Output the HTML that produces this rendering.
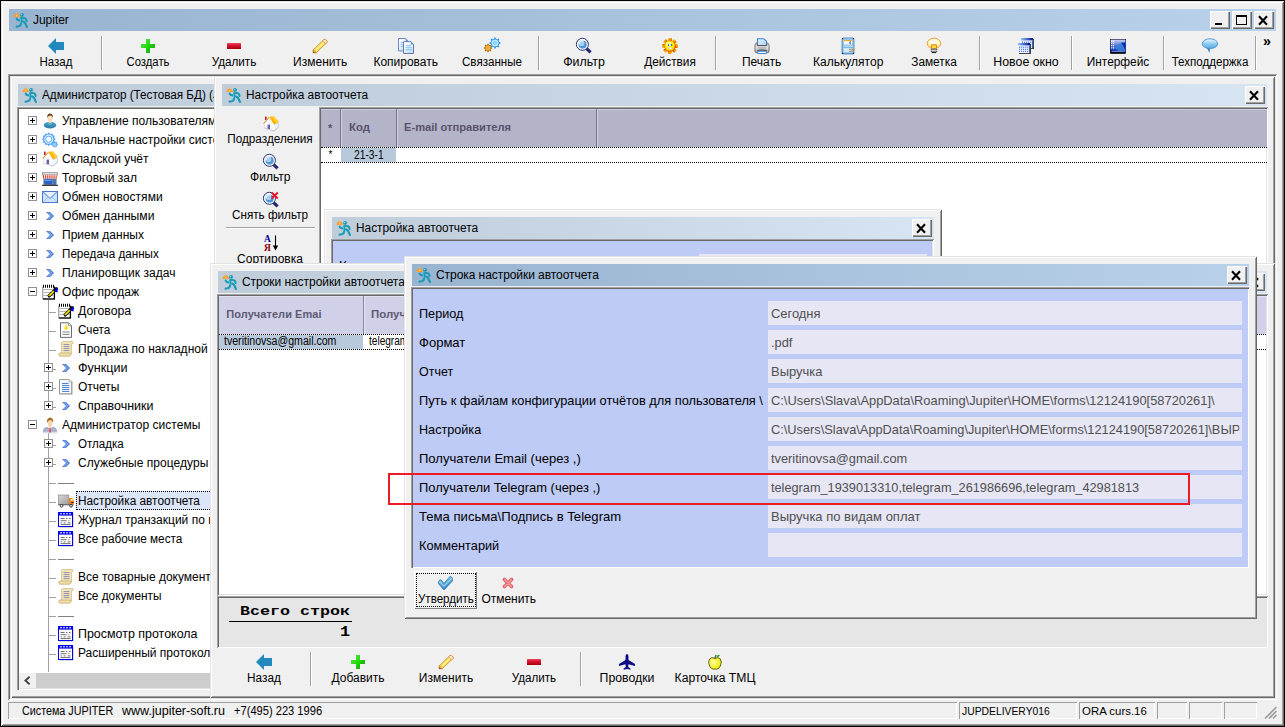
<!DOCTYPE html>
<html lang="ru"><head><meta charset="utf-8"><title>Jupiter</title><style>
html,body{margin:0;padding:0;}
body{width:1285px;height:727px;position:relative;overflow:hidden;background:#f0f0f0;font-family:"Liberation Sans",sans-serif;}
div{position:absolute;box-sizing:border-box;}
.t{white-space:pre;}
.i{position:absolute;overflow:visible;}
.clip{overflow:hidden;}
</style></head><body>
<div style="left:0px;top:0px;width:1285px;height:727px;background:#000;"></div>
<div style="left:1px;top:1px;width:1283px;height:725px;background:#f0f0f0;box-shadow:inset 1px 1px 0 #e3e3e3,inset -1px -1px 0 #696969,inset 2px 2px 0 #fff,inset -2px -2px 0 #a0a0a0;"></div>
<div style="left:9px;top:9px;width:1267px;height:22px;background:linear-gradient(90deg,#99b4d1,#b9d1ea);"></div>
<svg class="i" style="left:13px;top:12px;" width="16" height="16" viewBox="0 0 16 16"><path d="M0.4 4.9 Q0.7 1.8 3.7 1.6 Q6.6 1.8 7 4.9 Z" fill="#ff9d2e"/><rect x="3.2" y="0.1" width="1" height="1.6" fill="#ffb050"/><ellipse cx="3.6" cy="3.7" rx="1" ry="0.5" fill="#ffe3b8"/><circle cx="9" cy="2.9" r="1.95" fill="#1b9ab3"/><circle cx="8.5" cy="2.4" r="0.75" fill="#7fd6e4"/><g fill="none" stroke="#1a9ab5" stroke-width="2.1" stroke-linecap="round" stroke-linejoin="round"><path d="M3.7 6.6 Q4.3 8.3 6.2 8.4"/><path d="M8.1 6.4 L8.1 11.6 Q7.8 14.4 3.6 14.6"/><path d="M8.4 6.2 Q13.4 5.2 13.6 9"/><path d="M10 9.4 Q12.4 10 13 13 L14 15"/></g><path d="M7.6 6.6 L7.6 11" stroke="#6fd0e0" stroke-width="0.7" fill="none"/></svg>
<div class="t" id="t1" style="left:33px;top:13px;font-size:12px;line-height:15px;color:#000;font-family:'Liberation Sans', sans-serif;font-weight:normal;letter-spacing:-0.033px;">Jupiter</div>
<div style="left:1210px;top:11px;width:20px;height:18px;box-shadow:inset 1px 1px 0 #fff,inset -1px -1px 0 #696969,inset -2px -2px 0 #a0a0a0;background:#f0f0f0;"></div>
<div style="left:1215px;top:23px;width:7px;height:2px;background:#000;"></div>
<div style="left:1232px;top:11px;width:20px;height:18px;box-shadow:inset 1px 1px 0 #fff,inset -1px -1px 0 #696969,inset -2px -2px 0 #a0a0a0;background:#f0f0f0;"></div>
<div style="left:1236px;top:15px;width:11px;height:10px;border:1px solid #000;border-top:2px solid #000;"></div>
<div style="left:1254px;top:11px;width:20px;height:18px;box-shadow:inset 1px 1px 0 #fff,inset -1px -1px 0 #696969,inset -2px -2px 0 #a0a0a0;background:#f0f0f0;"></div>
<svg class="i" style="left:1258.0px;top:15.5px;" width="10" height="9" viewBox="0 0 10 9"><path d="M1 0.3 L9 8.7 M9 0.3 L1 8.7" stroke="#000" stroke-width="2.1"/></svg>
<svg class="i" style="left:48px;top:38px;" width="16" height="16" viewBox="0 0 16 16"><polygon points="0,8 8,0 8,4 16,4 16,12 8,12 8,16" fill="#2388bd"/></svg>
<div class="t" id="t2" style="left:-244px;width:600px;text-align:center;top:55px;font-size:12px;line-height:15px;color:#000;font-family:'Liberation Sans', sans-serif;font-weight:normal;transform:scaleX(0.9566560654248069);transform-origin:50% 0;">Назад</div>
<div style="left:101px;top:36px;width:1px;height:34px;background:#a0a0a0;"></div>
<div style="left:102px;top:36px;width:1px;height:34px;background:#fff;"></div>
<svg class="i" style="left:140px;top:38px;" width="16" height="16" viewBox="0 0 16 16"><defs><linearGradient id="gpl" x1="0" y1="0" x2="1" y2="1"><stop offset="0" stop-color="#5ee850"/><stop offset="0.5" stop-color="#22d808"/><stop offset="1" stop-color="#0a9a00"/></linearGradient></defs><path d="M6 1h4v5h5v4h-5v5h-4v-5h-5v-4h5z" fill="url(#gpl)"/></svg>
<div class="t" id="t3" style="left:-152.4px;width:600px;text-align:center;top:55px;font-size:12px;line-height:15px;color:#000;font-family:'Liberation Sans', sans-serif;font-weight:normal;transform:scaleX(0.940596094552929);transform-origin:50% 0;">Создать</div>
<svg class="i" style="left:226px;top:38px;" width="16" height="16" viewBox="0 0 16 16"><defs><linearGradient id="gmi" x1="0" y1="0" x2="0" y2="1"><stop offset="0" stop-color="#e6485c"/><stop offset="0.45" stop-color="#d81030"/><stop offset="1" stop-color="#a00008"/></linearGradient></defs><rect x="1" y="5" width="14" height="6" rx="0.6" fill="url(#gmi)"/></svg>
<div class="t" id="t4" style="left:-66px;width:600px;text-align:center;top:55px;font-size:12px;line-height:15px;color:#000;font-family:'Liberation Sans', sans-serif;font-weight:normal;transform:scaleX(0.9753835663143539);transform-origin:50% 0;">Удалить</div>
<svg class="i" style="left:312px;top:38px;" width="16" height="16" viewBox="0 0 16 16"><polygon points="1.3,14.7 1.3,11.9 11.7,1.7 13.4,1.3 15.1,3 15.1,4.3 4.3,14.7" fill="#f6dc4a" stroke="#d6923a" stroke-width="0.9" stroke-linejoin="round"/><polygon points="10.4,3 11.7,1.7 13.4,1.3 15.1,3 15.1,4.3 13.6,5.8" fill="#fbe6d4" stroke="#d6923a" stroke-width="0.8"/><polygon points="1.3,14.7 1.3,11.9 4.3,14.7" fill="#f6cca4" stroke="#b8741c" stroke-width="0.7"/><polygon points="1.3,14.7 1.3,13.3 2.8,14.7" fill="#4a3008"/><path d="M4.2 11.8 L11.6 4.6" stroke="#fff9b8" stroke-width="1.1"/></svg>
<div class="t" id="t5" style="left:20.19999999999999px;width:600px;text-align:center;top:55px;font-size:12px;line-height:15px;color:#000;font-family:'Liberation Sans', sans-serif;font-weight:normal;letter-spacing:0.020px;">Изменить</div>
<svg class="i" style="left:398px;top:38px;" width="16" height="16" viewBox="0 0 16 16"><defs><linearGradient id="gcp" x1="0" y1="0" x2="0.6" y2="1"><stop offset="0.3" stop-color="#fff"/><stop offset="1" stop-color="#b8e4fb"/></linearGradient></defs><path d="M0.5 0.5h7.2l2.2 2.4v10h-9.4z" fill="url(#gcp)" stroke="#7284c6" stroke-width="1"/><path d="M7.7 0.5l2.2 2.4h-2.2z" fill="#3a96ec"/><path d="M2.5 4.5h5M2.5 6.5h5M2.5 8.5h5" stroke="#8fbcec" stroke-width="1"/><path d="M5.5 3.7h7.4l2.6 2.8v9h-10z" fill="url(#gcp)" stroke="#6c74b4" stroke-width="1"/><path d="M12.9 3.7l2.6 2.8h-2.6z" fill="#3a96ec"/><path d="M7.5 7.7h5.5M7.5 9.7h6.2M7.5 11.7h6.2" stroke="#8fbcec" stroke-width="1"/></svg>
<div class="t" id="t6" style="left:105.69999999999999px;width:600px;text-align:center;top:55px;font-size:12px;line-height:15px;color:#000;font-family:'Liberation Sans', sans-serif;font-weight:normal;letter-spacing:-0.022px;">Копировать</div>
<svg class="i" style="left:484px;top:38px;" width="16" height="16" viewBox="0 0 16 16"><rect x="14.75" y="4.15" width="1.7" height="1.7" fill="#2a92ee" transform="rotate(0.0 15.60 5.00)"/><rect x="13.40" y="7.40" width="1.7" height="1.7" fill="#2a92ee" transform="rotate(45.0 14.25 8.25)"/><rect x="10.15" y="8.75" width="1.7" height="1.7" fill="#2a92ee" transform="rotate(90.0 11.00 9.60)"/><rect x="6.90" y="7.40" width="1.7" height="1.7" fill="#2a92ee" transform="rotate(135.0 7.75 8.25)"/><rect x="5.55" y="4.15" width="1.7" height="1.7" fill="#2a92ee" transform="rotate(180.0 6.40 5.00)"/><rect x="6.90" y="0.90" width="1.7" height="1.7" fill="#2a92ee" transform="rotate(225.0 7.75 1.75)"/><rect x="10.15" y="-0.45" width="1.7" height="1.7" fill="#2a92ee" transform="rotate(270.0 11.00 0.40)"/><rect x="13.40" y="0.90" width="1.7" height="1.7" fill="#2a92ee" transform="rotate(315.0 14.25 1.75)"/><circle cx="11" cy="5" r="4.00" fill="#b4eaff" stroke="#2a92ee" stroke-width="0.8"/><circle cx="11" cy="5" r="1.3" fill="#fff" stroke="#2a92ee" stroke-width="0.6400000000000001"/><rect x="6.80" y="9.30" width="1.4" height="1.4" fill="#b87a08" transform="rotate(0.0 7.50 10.00)"/><rect x="5.77" y="11.77" width="1.4" height="1.4" fill="#b87a08" transform="rotate(45.0 6.47 12.47)"/><rect x="3.30" y="12.80" width="1.4" height="1.4" fill="#b87a08" transform="rotate(90.0 4.00 13.50)"/><rect x="0.83" y="11.77" width="1.4" height="1.4" fill="#b87a08" transform="rotate(135.0 1.53 12.47)"/><rect x="-0.20" y="9.30" width="1.4" height="1.4" fill="#b87a08" transform="rotate(180.0 0.50 10.00)"/><rect x="0.83" y="6.83" width="1.4" height="1.4" fill="#b87a08" transform="rotate(225.0 1.53 7.53)"/><rect x="3.30" y="5.80" width="1.4" height="1.4" fill="#b87a08" transform="rotate(270.0 4.00 6.50)"/><rect x="5.77" y="6.83" width="1.4" height="1.4" fill="#b87a08" transform="rotate(315.0 6.47 7.53)"/><circle cx="4" cy="10" r="2.90" fill="#ffb43a" stroke="#b87a08" stroke-width="0.8"/><circle cx="4" cy="10" r="1.1" fill="#fff" stroke="#b87a08" stroke-width="0.6400000000000001"/></svg>
<div class="t" id="t7" style="left:192.3px;width:600px;text-align:center;top:55px;font-size:12px;line-height:15px;color:#000;font-family:'Liberation Sans', sans-serif;font-weight:normal;transform:scaleX(0.9655519235604727);transform-origin:50% 0;">Связанные</div>
<div style="left:538px;top:36px;width:1px;height:34px;background:#a0a0a0;"></div>
<div style="left:539px;top:36px;width:1px;height:34px;background:#fff;"></div>
<svg class="i" style="left:576px;top:38px;" width="16" height="16" viewBox="0 0 16 16"><path d="M10.6 10.6 L14.6 14.4" stroke="#232a72" stroke-width="3.2" stroke-linecap="butt"/><circle cx="6.4" cy="6.3" r="6" fill="#fff" stroke="#2a2f78" stroke-width="1"/><circle cx="6.6" cy="6.6" r="4.1" fill="#4f97d6"/><circle cx="5.6" cy="5.4" r="2.7" fill="#a8d0f0"/><path d="M3.2 6.2 A3 3 0 0 1 7.6 3.2" stroke="#fff" stroke-width="1" fill="none"/></svg>
<div class="t" id="t8" style="left:283.70000000000005px;width:600px;text-align:center;top:55px;font-size:12px;line-height:15px;color:#000;font-family:'Liberation Sans', sans-serif;font-weight:normal;transform:scaleX(1.0319379844961238);transform-origin:50% 0;">Фильтр</div>
<svg class="i" style="left:662px;top:38px;" width="16" height="16" viewBox="0 0 16 16"><defs><linearGradient id="gsn" x1="0" y1="0" x2="1" y2="1"><stop offset="0.15" stop-color="#ffc400"/><stop offset="0.55" stop-color="#f08000"/><stop offset="1" stop-color="#c02c00"/></linearGradient><radialGradient id="gsf" cx="0.35" cy="0.3" r="0.8"><stop offset="0" stop-color="#ffffc0"/><stop offset="0.6" stop-color="#fff000"/><stop offset="1" stop-color="#f8b800"/></radialGradient></defs><g fill="url(#gsn)"><rect x="6.10" y="0.00" width="3.8" height="3.4" rx="0.8" transform="rotate(0 8.00 1.70)"/><rect x="10.55" y="1.85" width="3.8" height="3.4" rx="0.8" transform="rotate(45 12.45 3.55)"/><rect x="12.40" y="6.30" width="3.8" height="3.4" rx="0.8" transform="rotate(90 14.30 8.00)"/><rect x="10.55" y="10.75" width="3.8" height="3.4" rx="0.8" transform="rotate(135 12.45 12.45)"/><rect x="6.10" y="12.60" width="3.8" height="3.4" rx="0.8" transform="rotate(180 8.00 14.30)"/><rect x="1.65" y="10.75" width="3.8" height="3.4" rx="0.8" transform="rotate(225 3.55 12.45)"/><rect x="-0.20" y="6.30" width="3.8" height="3.4" rx="0.8" transform="rotate(270 1.70 8.00)"/><rect x="1.65" y="1.85" width="3.8" height="3.4" rx="0.8" transform="rotate(315 3.55 3.55)"/><circle cx="8" cy="8" r="5.6"/></g><circle cx="8" cy="8" r="4.8" fill="url(#gsf)"/><ellipse cx="6.5" cy="7.1" rx="0.7" ry="1.1" fill="#1868f0"/><ellipse cx="9.6" cy="7.1" rx="0.7" ry="1.1" fill="#1868f0"/><path d="M5.3 9.2 h5.5 q-0.6 2.2 -2.75 2.2 q-2.15 0 -2.75 -2.2z" fill="#f4f4ff" stroke="#f0c000" stroke-width="0.4"/></svg>
<div class="t" id="t9" style="left:369.70000000000005px;width:600px;text-align:center;top:55px;font-size:12px;line-height:15px;color:#000;font-family:'Liberation Sans', sans-serif;font-weight:normal;transform:scaleX(0.983298662704309);transform-origin:50% 0;">Действия</div>
<div style="left:715px;top:36px;width:1px;height:34px;background:#a0a0a0;"></div>
<div style="left:716px;top:36px;width:1px;height:34px;background:#fff;"></div>
<svg class="i" style="left:754px;top:38px;" width="16" height="16" viewBox="0 0 16 16"><defs><linearGradient id="gpr" x1="0" y1="0" x2="0" y2="1"><stop offset="0" stop-color="#fff"/><stop offset="0.6" stop-color="#d8d8d8"/><stop offset="1" stop-color="#9a9a9a"/></linearGradient><linearGradient id="gpp" x1="0" y1="0" x2="1" y2="1"><stop offset="0" stop-color="#e8f2ff"/><stop offset="1" stop-color="#a8d0f8"/></linearGradient></defs><path d="M3.5 7.5v-6.8h6.2l2.8 2.6v4.2z" fill="url(#gpp)" stroke="#3f86d2" stroke-width="1.1"/><path d="M1 7.2 q0-1.8 2-2.4v2.8h10v-2.8q2 0.6 2 2.4v6.2q0 1.2-1.2 1.2h-11.6q-1.2 0-1.2-1.2z" fill="url(#gpr)" stroke="#6a6a6a" stroke-width="0.9"/><path d="M3.2 7.6h9.6" stroke="#555" stroke-width="0.9"/><rect x="3.6" y="9" width="8.8" height="3" fill="#bdbdbd"/><path d="M3.4 12.6 q4.6-1.2 9.2 0" stroke="#222" stroke-width="0.9" fill="none"/><path d="M3.6 13.2h8.8v2.3h-8.8z" fill="#eef4fc" stroke="#3f86d2" stroke-width="1"/></svg>
<div class="t" id="t10" style="left:461.6px;width:600px;text-align:center;top:55px;font-size:12px;line-height:15px;color:#000;font-family:'Liberation Sans', sans-serif;font-weight:normal;letter-spacing:-0.002px;">Печать</div>
<svg class="i" style="left:840px;top:38px;" width="16" height="16" viewBox="0 0 16 16"><defs><linearGradient id="gca" x1="0" y1="0" x2="0" y2="1"><stop offset="0" stop-color="#9ccaec"/><stop offset="1" stop-color="#6eaadc"/></linearGradient></defs><rect x="2" y="0" width="12" height="16" rx="0.8" fill="url(#gca)" stroke="#4a84bc" stroke-width="0.8"/><rect x="2" y="0" width="1.2" height="1.2" fill="#123"/><rect x="12.8" y="0" width="1.2" height="1.2" fill="#123"/><rect x="2" y="14.8" width="1.2" height="1.2" fill="#123"/><rect x="12.8" y="14.8" width="1.2" height="1.2" fill="#123"/><rect x="3.8" y="2" width="8.4" height="4.6" fill="#eef8ff"/><rect x="4" y="2" width="8" height="1.1" fill="#ffa826"/><path d="M10.8 3.4 q-2 1.2 0 2.6" stroke="#4a70b8" stroke-width="1.2" fill="none"/><rect x="3.4" y="7.4" width="9.4" height="1.6" fill="#b4daf2"/><rect x="3.4" y="10" width="9.2" height="4.6" fill="#c4e2f6"/><rect x="11" y="10.6" width="1.8" height="3.4" fill="#ffa21a"/><path d="M3.8 11.4h5M3.8 13.4h5" stroke="#e8f2fa" stroke-width="1"/><path d="M9.2 11.4h1.6M9.2 13.4h1.6" stroke="#4a90d0" stroke-width="1"/></svg>
<div class="t" id="t11" style="left:548.2px;width:600px;text-align:center;top:55px;font-size:12px;line-height:15px;color:#000;font-family:'Liberation Sans', sans-serif;font-weight:normal;letter-spacing:0.005px;">Калькулятор</div>
<svg class="i" style="left:926px;top:38px;" width="16" height="16" viewBox="0 0 16 16"><defs><radialGradient id="gbu" cx="0.5" cy="0.4" r="0.6"><stop offset="0" stop-color="#fff"/><stop offset="0.6" stop-color="#fff8c8"/><stop offset="1" stop-color="#ffd860"/></radialGradient></defs><ellipse cx="8" cy="5.4" rx="6.8" ry="5.2" fill="url(#gbu)" stroke="#eca048" stroke-width="1"/><path d="M5.6 10.2 v-3.4 h4.8 v3.4" fill="#ffe23a" stroke="#e87a10" stroke-width="1"/><rect x="5.2" y="11" width="5.6" height="3" fill="#9aa0a6" stroke="#4a4a4a" stroke-width="0.7"/><path d="M5.4 12.6h5.2" stroke="#e8e8e8" stroke-width="0.8"/><rect x="6" y="14" width="4" height="1.1" fill="#2a2a2a"/></svg>
<div class="t" id="t12" style="left:633.6px;width:600px;text-align:center;top:55px;font-size:12px;line-height:15px;color:#000;font-family:'Liberation Sans', sans-serif;font-weight:normal;transform:scaleX(0.9861158144260075);transform-origin:50% 0;">Заметка</div>
<div style="left:979px;top:36px;width:1px;height:34px;background:#a0a0a0;"></div>
<div style="left:980px;top:36px;width:1px;height:34px;background:#fff;"></div>
<svg class="i" style="left:1018px;top:38px;" width="16" height="16" viewBox="0 0 16 16"><defs><linearGradient id="gnw" x1="0" y1="0" x2="1" y2="0"><stop offset="0" stop-color="#8ec8ff"/><stop offset="1" stop-color="#00108c"/></linearGradient></defs><rect x="4" y="1" width="12" height="10" fill="#444"/><rect x="3" y="0" width="12" height="10" fill="#f4f8ff"/><rect x="3" y="0" width="12" height="2.4" fill="url(#gnw)"/><rect x="4.00" y="3.60" width="1.1" height="1.1" fill="#2a5ae8"/><rect x="6.05" y="3.60" width="1.1" height="1.1" fill="#2a5ae8"/><rect x="8.10" y="3.60" width="1.1" height="1.1" fill="#2a5ae8"/><rect x="10.15" y="3.60" width="1.1" height="1.1" fill="#2a5ae8"/><rect x="12.20" y="3.60" width="1.1" height="1.1" fill="#2a5ae8"/><rect x="4.00" y="5.70" width="1.1" height="1.1" fill="#2a5ae8"/><rect x="6.05" y="5.70" width="1.1" height="1.1" fill="#2a5ae8"/><rect x="8.10" y="5.70" width="1.1" height="1.1" fill="#2a5ae8"/><rect x="10.15" y="5.70" width="1.1" height="1.1" fill="#2a5ae8"/><rect x="12.20" y="5.70" width="1.1" height="1.1" fill="#2a5ae8"/><rect x="4.00" y="7.80" width="1.1" height="1.1" fill="#2a5ae8"/><rect x="6.05" y="7.80" width="1.1" height="1.1" fill="#2a5ae8"/><rect x="8.10" y="7.80" width="1.1" height="1.1" fill="#2a5ae8"/><rect x="10.15" y="7.80" width="1.1" height="1.1" fill="#2a5ae8"/><rect x="12.20" y="7.80" width="1.1" height="1.1" fill="#2a5ae8"/><rect x="14" y="2.4" width="1" height="7.6" fill="#3a6ab8"/><rect x="1" y="6" width="12" height="10" fill="#444"/><rect x="0" y="5" width="12" height="10" fill="#f4f8ff"/><rect x="0" y="5" width="12" height="2.4" fill="url(#gnw)"/><rect x="1.00" y="8.60" width="1.1" height="1.1" fill="#2a5ae8"/><rect x="3.05" y="8.60" width="1.1" height="1.1" fill="#2a5ae8"/><rect x="5.10" y="8.60" width="1.1" height="1.1" fill="#2a5ae8"/><rect x="7.15" y="8.60" width="1.1" height="1.1" fill="#2a5ae8"/><rect x="9.20" y="8.60" width="1.1" height="1.1" fill="#2a5ae8"/><rect x="1.00" y="10.70" width="1.1" height="1.1" fill="#2a5ae8"/><rect x="3.05" y="10.70" width="1.1" height="1.1" fill="#2a5ae8"/><rect x="5.10" y="10.70" width="1.1" height="1.1" fill="#2a5ae8"/><rect x="7.15" y="10.70" width="1.1" height="1.1" fill="#2a5ae8"/><rect x="9.20" y="10.70" width="1.1" height="1.1" fill="#2a5ae8"/><rect x="1.00" y="12.80" width="1.1" height="1.1" fill="#2a5ae8"/><rect x="3.05" y="12.80" width="1.1" height="1.1" fill="#2a5ae8"/><rect x="5.10" y="12.80" width="1.1" height="1.1" fill="#2a5ae8"/><rect x="7.15" y="12.80" width="1.1" height="1.1" fill="#2a5ae8"/><rect x="9.20" y="12.80" width="1.1" height="1.1" fill="#2a5ae8"/><rect x="11" y="7.4" width="1" height="7.6" fill="#3a6ab8"/></svg>
<div class="t" id="t13" style="left:725.7px;width:600px;text-align:center;top:55px;font-size:12px;line-height:15px;color:#000;font-family:'Liberation Sans', sans-serif;font-weight:normal;transform:scaleX(1.0283464566929132);transform-origin:50% 0;">Новое окно</div>
<div style="left:1071px;top:36px;width:1px;height:34px;background:#a0a0a0;"></div>
<div style="left:1072px;top:36px;width:1px;height:34px;background:#fff;"></div>
<svg class="i" style="left:1110px;top:38px;" width="16" height="16" viewBox="0 0 16 16"><defs><linearGradient id="gdk" x1="0" y1="0" x2="0" y2="1"><stop offset="0" stop-color="#ccd2f4"/><stop offset="0.5" stop-color="#5070d0"/><stop offset="1" stop-color="#0a24a8"/></linearGradient></defs><rect x="0" y="1" width="16" height="14.6" fill="#101030"/><rect x="0.6" y="1.6" width="14.8" height="12.6" fill="url(#gdk)"/><polygon points="4,10 12,4 15.4,4.5 15.4,14.2 10,14.2" fill="#3a80dc" opacity="0.85"/><polygon points="11.5,5 15.4,4.5 15.4,12" fill="#0c2cb0"/><path d="M1.7 2.6v8.4M3.6 2.6v8.4" stroke="#fff" stroke-width="1.1" stroke-dasharray="1.3 0.9"/><rect x="2" y="13" width="11" height="1" fill="#6a80c8"/><rect x="1" y="14.4" width="14" height="1.2" fill="#000"/></svg>
<div class="t" id="t14" style="left:818.2px;width:600px;text-align:center;top:55px;font-size:12px;line-height:15px;color:#000;font-family:'Liberation Sans', sans-serif;font-weight:normal;transform:scaleX(0.9870489372219475);transform-origin:50% 0;">Интерфейс</div>
<div style="left:1163px;top:36px;width:1px;height:34px;background:#a0a0a0;"></div>
<div style="left:1164px;top:36px;width:1px;height:34px;background:#fff;"></div>
<svg class="i" style="left:1202px;top:38px;" width="16" height="16" viewBox="0 0 16 16"><defs><linearGradient id="gbb" x1="0" y1="0" x2="0" y2="1"><stop offset="0" stop-color="#f4fbff"/><stop offset="0.5" stop-color="#8ecdf4"/><stop offset="1" stop-color="#5aa6e2"/></linearGradient></defs><path d="M4.6 9.6 L7.4 15 L8.2 10.2z" fill="#3f86c8"/><ellipse cx="8" cy="5.7" rx="7.7" ry="4.9" fill="url(#gbb)" stroke="#4a8ed0" stroke-width="0.9"/></svg>
<div class="t" id="t15" style="left:909.7px;width:600px;text-align:center;top:55px;font-size:12px;line-height:15px;color:#000;font-family:'Liberation Sans', sans-serif;font-weight:normal;transform:scaleX(0.9642113533686899);transform-origin:50% 0;">Техподдержка</div>
<div style="left:1255px;top:36px;width:1px;height:34px;background:#a0a0a0;"></div>
<div style="left:1256px;top:36px;width:1px;height:34px;background:#fff;"></div>
<div class="t" id="t16" style="left:1263.3px;top:31px;font-size:15px;line-height:19px;color:#000;font-family:'Liberation Sans', sans-serif;font-weight:bold;transform:scaleX(0.95);transform-origin:0 0;">»</div>
<div style="left:8px;top:74px;width:1269px;height:626px;box-shadow:inset 1px 1px 0 #a0a0a0,inset -1px -1px 0 #fff,inset 2px 2px 0 #696969,inset -2px -2px 0 #e3e3e3;background:#f0f0f0;"></div>
<div class="clip" style="left:10px;top:76px;width:205px;height:622px;">
<div style="left:0px;top:0px;width:400px;height:622px;background:#f0f0f0;box-shadow:inset 1px 1px 0 #e3e3e3,inset 2px 2px 0 #fff,inset 0 -1px 0 #696969,inset 0 -2px 0 #a0a0a0;"></div>
</div>
<div class="clip" style="left:0px;top:0px;width:215px;height:727px;">
<div style="left:18px;top:84px;width:1250px;height:22px;background:linear-gradient(90deg,#bfcddb,#d7e4f2);"></div>
<svg class="i" style="left:22px;top:87px;" width="16" height="16" viewBox="0 0 16 16"><path d="M0.4 4.9 Q0.7 1.8 3.7 1.6 Q6.6 1.8 7 4.9 Z" fill="#ff9d2e"/><rect x="3.2" y="0.1" width="1" height="1.6" fill="#ffb050"/><ellipse cx="3.6" cy="3.7" rx="1" ry="0.5" fill="#ffe3b8"/><circle cx="9" cy="2.9" r="1.95" fill="#1b9ab3"/><circle cx="8.5" cy="2.4" r="0.75" fill="#7fd6e4"/><g fill="none" stroke="#1a9ab5" stroke-width="2.1" stroke-linecap="round" stroke-linejoin="round"><path d="M3.7 6.6 Q4.3 8.3 6.2 8.4"/><path d="M8.1 6.4 L8.1 11.6 Q7.8 14.4 3.6 14.6"/><path d="M8.4 6.2 Q13.4 5.2 13.6 9"/><path d="M10 9.4 Q12.4 10 13 13 L14 15"/></g><path d="M7.6 6.6 L7.6 11" stroke="#6fd0e0" stroke-width="0.7" fill="none"/></svg>
<div class="t" id="t17" style="left:42px;top:88px;font-size:12px;line-height:15px;color:#000;font-family:'Liberation Sans', sans-serif;font-weight:normal;transform:scaleX(0.975);transform-origin:0 0;">Администратор (Тестовая БД) (JUPDELIVERY016)</div>
<div style="left:17px;top:107px;width:300px;height:583px;background:#fff;box-shadow:inset 1px 1px 0 #a0a0a0,inset 2px 2px 0 #696969,inset 0 -1px 0 #fff,inset 0 -2px 0 #e3e3e3;"></div>
<div style="left:48px;top:300px;width:1px;height:107px;background:#a0a0a0;"></div>
<div style="left:48px;top:433px;width:1px;height:239px;background:#a0a0a0;"></div>
<div style="left:28px;top:116px;width:9px;height:9px;border:1px solid #919191;background:#fff;"></div>
<div style="left:30px;top:120px;width:5px;height:1px;background:#000;"></div>
<div style="left:32px;top:118px;width:1px;height:5px;background:#000;"></div>
<svg class="i" style="left:42px;top:113px;" width="16" height="16" viewBox="0 0 16 16"><defs><linearGradient id="gus" x1="0" y1="0" x2="0" y2="1"><stop offset="0" stop-color="#4aa4cc"/><stop offset="1" stop-color="#2a7aa8"/></linearGradient></defs><ellipse cx="8" cy="12.2" rx="6.2" ry="3.4" fill="url(#gus)"/><rect x="6.6" y="7" width="2.8" height="3" fill="#f6d4b4"/><path d="M6 10.4 L8 11.6 L10 10.4" stroke="#8fd0e8" stroke-width="0.7" fill="none"/><ellipse cx="8" cy="4.9" rx="2.6" ry="3.1" fill="#fbdcbc"/><path d="M5.2 4.8 Q4.8 0.6 8.2 0.4 Q11.2 0.8 10.8 4.8 Q10.2 2.8 8.6 2.6 Q6.2 2.6 5.2 4.8z" fill="#6a4220"/></svg>
<div class="t" id="t18" style="left:62px;top:114px;font-size:12px;line-height:15px;color:#000;font-family:'Liberation Sans', sans-serif;font-weight:normal;">Управление пользователями</div>
<div style="left:28px;top:135px;width:9px;height:9px;border:1px solid #919191;background:#fff;"></div>
<div style="left:30px;top:139px;width:5px;height:1px;background:#000;"></div>
<div style="left:32px;top:137px;width:1px;height:5px;background:#000;"></div>
<svg class="i" style="left:42px;top:132px;" width="16" height="16" viewBox="0 0 16 16"><rect x="11.85" y="6.45" width="1.5" height="1.5" fill="#4aa2ff" transform="rotate(0.0 12.60 7.20)"/><rect x="11.07" y="9.35" width="1.5" height="1.5" fill="#4aa2ff" transform="rotate(30.0 11.82 10.10)"/><rect x="8.95" y="11.47" width="1.5" height="1.5" fill="#4aa2ff" transform="rotate(60.0 9.70 12.22)"/><rect x="6.05" y="12.25" width="1.5" height="1.5" fill="#4aa2ff" transform="rotate(90.0 6.80 13.00)"/><rect x="3.15" y="11.47" width="1.5" height="1.5" fill="#4aa2ff" transform="rotate(120.0 3.90 12.22)"/><rect x="1.03" y="9.35" width="1.5" height="1.5" fill="#4aa2ff" transform="rotate(150.0 1.78 10.10)"/><rect x="0.25" y="6.45" width="1.5" height="1.5" fill="#4aa2ff" transform="rotate(180.0 1.00 7.20)"/><rect x="1.03" y="3.55" width="1.5" height="1.5" fill="#4aa2ff" transform="rotate(210.0 1.78 4.30)"/><rect x="3.15" y="1.43" width="1.5" height="1.5" fill="#4aa2ff" transform="rotate(240.0 3.90 2.18)"/><rect x="6.05" y="0.65" width="1.5" height="1.5" fill="#4aa2ff" transform="rotate(270.0 6.80 1.40)"/><rect x="8.95" y="1.43" width="1.5" height="1.5" fill="#4aa2ff" transform="rotate(300.0 9.70 2.18)"/><rect x="11.07" y="3.55" width="1.5" height="1.5" fill="#4aa2ff" transform="rotate(330.0 11.82 4.30)"/><circle cx="6.8" cy="7.2" r="5.20" fill="#e8f6ff" stroke="#4aa2ff" stroke-width="1.2"/><circle cx="6.8" cy="7.2" r="3.1" fill="#fff" stroke="#4aa2ff" stroke-width="0.96"/><rect x="14.85" y="11.85" width="1.1" height="1.1" fill="#4aa2ff" transform="rotate(0.0 15.40 12.40)"/><rect x="14.09" y="13.69" width="1.1" height="1.1" fill="#4aa2ff" transform="rotate(45.0 14.64 14.24)"/><rect x="12.25" y="14.45" width="1.1" height="1.1" fill="#4aa2ff" transform="rotate(90.0 12.80 15.00)"/><rect x="10.41" y="13.69" width="1.1" height="1.1" fill="#4aa2ff" transform="rotate(135.0 10.96 14.24)"/><rect x="9.65" y="11.85" width="1.1" height="1.1" fill="#4aa2ff" transform="rotate(180.0 10.20 12.40)"/><rect x="10.41" y="10.01" width="1.1" height="1.1" fill="#4aa2ff" transform="rotate(225.0 10.96 10.56)"/><rect x="12.25" y="9.25" width="1.1" height="1.1" fill="#4aa2ff" transform="rotate(270.0 12.80 9.80)"/><rect x="14.09" y="10.01" width="1.1" height="1.1" fill="#4aa2ff" transform="rotate(315.0 14.64 10.56)"/><circle cx="12.8" cy="12.4" r="2.00" fill="#dff0ff" stroke="#4aa2ff" stroke-width="0.9"/><circle cx="12.8" cy="12.4" r="0.9" fill="#fff" stroke="#4aa2ff" stroke-width="0.7200000000000001"/></svg>
<div class="t" id="t19" style="left:62px;top:133px;font-size:12px;line-height:15px;color:#000;font-family:'Liberation Sans', sans-serif;font-weight:normal;">Начальные настройки системы</div>
<div style="left:28px;top:154px;width:9px;height:9px;border:1px solid #919191;background:#fff;"></div>
<div style="left:30px;top:158px;width:5px;height:1px;background:#000;"></div>
<div style="left:32px;top:156px;width:1px;height:5px;background:#000;"></div>
<svg class="i" style="left:42px;top:151px;" width="16" height="16" viewBox="0 0 16 16"><rect x="2" y="0.6" width="1.6" height="3.4" fill="#d01818"/><polygon points="1.6,7 6.4,2 6.4,13.4 1.6,12" fill="#fafaff" stroke="#b0b0c8" stroke-width="0.5"/><polygon points="6.4,2 11,8.4 15.4,6.6 15.4,11.2 11,15 6.4,13.4" fill="#eef6fa" stroke="#b0b0c8" stroke-width="0.5"/><polygon points="1.6,7 6.4,2 11,8.4 11,15 1.6,12" fill="#fcfcff"/><polygon points="6.2,0.8 11,0.4 15.8,5.6 11.2,8.8" fill="#ffb400"/><polygon points="8.6,0.6 11,0.4 15.8,5.6 13.6,7.2" fill="#ffd23c"/><path d="M0.6 7.6 L6.2 1.2" stroke="#d89000" stroke-width="1"/><rect x="4.6" y="8.6" width="2.4" height="4.6" fill="#6060a8"/><path d="M1.6 12 L11 15 L15.4 11.2" stroke="#b8b8cc" stroke-width="0.7" fill="none"/></svg>
<div class="t" id="t20" style="left:62px;top:152px;font-size:12px;line-height:15px;color:#000;font-family:'Liberation Sans', sans-serif;font-weight:normal;letter-spacing:-0.061px;">Складской учёт</div>
<div style="left:28px;top:173px;width:9px;height:9px;border:1px solid #919191;background:#fff;"></div>
<div style="left:30px;top:177px;width:5px;height:1px;background:#000;"></div>
<div style="left:32px;top:175px;width:1px;height:5px;background:#000;"></div>
<svg class="i" style="left:42px;top:170px;" width="16" height="16" viewBox="0 0 16 16"><g transform="translate(0,2.2)"><rect x="0.5" y="0.5" width="15" height="2.2" fill="#e4e4e4" stroke="#8a8a8a" stroke-width="0.8"/><rect x="1" y="3" width="14" height="3.4" fill="#fff"/><rect x="1.00" y="3" width="1.1" height="3.4" fill="#e43018"/><rect x="3.10" y="3" width="1.1" height="3.4" fill="#e43018"/><rect x="5.20" y="3" width="1.1" height="3.4" fill="#e43018"/><rect x="7.30" y="3" width="1.1" height="3.4" fill="#e43018"/><rect x="9.40" y="3" width="1.1" height="3.4" fill="#e43018"/><rect x="11.50" y="3" width="1.1" height="3.4" fill="#e43018"/><rect x="13.60" y="3" width="1.1" height="3.4" fill="#e43018"/><rect x="1.4" y="6.4" width="13.2" height="6.4" fill="#7a8088"/><rect x="2.4" y="7" width="7.6" height="5.2" fill="#2a62c8"/><rect x="11.2" y="7" width="2.4" height="5.8" fill="#3a72d4"/><path d="M2.6 8.2h7" stroke="#7ab0f0" stroke-width="0.9"/><rect x="0" y="12.6" width="16" height="1.2" fill="#3a3a3a"/></g></svg>
<div class="t" id="t21" style="left:62px;top:171px;font-size:12px;line-height:15px;color:#000;font-family:'Liberation Sans', sans-serif;font-weight:normal;letter-spacing:0.021px;">Торговый зал</div>
<div style="left:28px;top:192px;width:9px;height:9px;border:1px solid #919191;background:#fff;"></div>
<div style="left:30px;top:196px;width:5px;height:1px;background:#000;"></div>
<div style="left:32px;top:194px;width:1px;height:5px;background:#000;"></div>
<svg class="i" style="left:42px;top:189px;" width="16" height="16" viewBox="0 0 16 16"><rect x="0.5" y="2.5" width="15" height="11" fill="#cfe4ff" stroke="#4a78d0" stroke-width="1"/><path d="M1 3 L8 9.4 L15 3" stroke="#7aa4e4" stroke-width="1.1" fill="#e6f1ff"/><path d="M1 13 L6 8M15 13 L10 8" stroke="#9abcf0" stroke-width="0.9" fill="none"/></svg>
<div class="t" id="t22" style="left:62px;top:190px;font-size:12px;line-height:15px;color:#000;font-family:'Liberation Sans', sans-serif;font-weight:normal;letter-spacing:0.047px;">Обмен новостями</div>
<div style="left:28px;top:211px;width:9px;height:9px;border:1px solid #919191;background:#fff;"></div>
<div style="left:30px;top:215px;width:5px;height:1px;background:#000;"></div>
<div style="left:32px;top:213px;width:1px;height:5px;background:#000;"></div>
<svg class="i" style="left:42px;top:208px;" width="16" height="16" viewBox="0 0 16 16"><polygon points="4,4 8,4 12,8 8,12 4,12 8,8" fill="#4a7ad8"/><polygon points="5.6,4.6 7,4.6 10.4,8 7,11.4 5.6,11.4 9,8" fill="#8aaef0"/></svg>
<div class="t" id="t23" style="left:62px;top:209px;font-size:12px;line-height:15px;color:#000;font-family:'Liberation Sans', sans-serif;font-weight:normal;transform:scaleX(1.0126582278481013);transform-origin:0 0;">Обмен данными</div>
<div style="left:28px;top:230px;width:9px;height:9px;border:1px solid #919191;background:#fff;"></div>
<div style="left:30px;top:234px;width:5px;height:1px;background:#000;"></div>
<div style="left:32px;top:232px;width:1px;height:5px;background:#000;"></div>
<svg class="i" style="left:42px;top:227px;" width="16" height="16" viewBox="0 0 16 16"><polygon points="4,4 8,4 12,8 8,12 4,12 8,8" fill="#4a7ad8"/><polygon points="5.6,4.6 7,4.6 10.4,8 7,11.4 5.6,11.4 9,8" fill="#8aaef0"/></svg>
<div class="t" id="t24" style="left:62px;top:228px;font-size:12px;line-height:15px;color:#000;font-family:'Liberation Sans', sans-serif;font-weight:normal;letter-spacing:0.014px;">Прием данных</div>
<div style="left:28px;top:249px;width:9px;height:9px;border:1px solid #919191;background:#fff;"></div>
<div style="left:30px;top:253px;width:5px;height:1px;background:#000;"></div>
<div style="left:32px;top:251px;width:1px;height:5px;background:#000;"></div>
<svg class="i" style="left:42px;top:246px;" width="16" height="16" viewBox="0 0 16 16"><polygon points="4,4 8,4 12,8 8,12 4,12 8,8" fill="#4a7ad8"/><polygon points="5.6,4.6 7,4.6 10.4,8 7,11.4 5.6,11.4 9,8" fill="#8aaef0"/></svg>
<div class="t" id="t25" style="left:62px;top:247px;font-size:12px;line-height:15px;color:#000;font-family:'Liberation Sans', sans-serif;font-weight:normal;transform:scaleX(0.9717960784313725);transform-origin:0 0;">Передача данных</div>
<div style="left:28px;top:268px;width:9px;height:9px;border:1px solid #919191;background:#fff;"></div>
<div style="left:30px;top:272px;width:5px;height:1px;background:#000;"></div>
<div style="left:32px;top:270px;width:1px;height:5px;background:#000;"></div>
<svg class="i" style="left:42px;top:265px;" width="16" height="16" viewBox="0 0 16 16"><polygon points="4,4 8,4 12,8 8,12 4,12 8,8" fill="#4a7ad8"/><polygon points="5.6,4.6 7,4.6 10.4,8 7,11.4 5.6,11.4 9,8" fill="#8aaef0"/></svg>
<div class="t" id="t26" style="left:62px;top:266px;font-size:12px;line-height:15px;color:#000;font-family:'Liberation Sans', sans-serif;font-weight:normal;letter-spacing:0.073px;">Планировщик задач</div>
<div style="left:28px;top:287px;width:9px;height:9px;border:1px solid #919191;background:#fff;"></div>
<div style="left:30px;top:291px;width:5px;height:1px;background:#000;"></div>
<svg class="i" style="left:42px;top:284px;" width="16" height="16" viewBox="0 0 16 16"><rect x="0.5" y="2.5" width="12" height="12.6" fill="#fff"/><path d="M0.8 2.6v12" stroke="#808080" stroke-width="0.9"/><path d="M12.4 2.6v12.6" stroke="#000" stroke-width="1.3"/><path d="M0.8 15h12" stroke="#000" stroke-width="1.4"/><path d="M1 2.2h11.4" stroke="#000" stroke-width="3" stroke-dasharray="1 1"/><path d="M1.5 5.5h10M1.5 8.5h10M1.5 11.5h10" stroke="#b4b4b4" stroke-width="1"/><path d="M6.4 12.6 L15.2 3.8" stroke="#000" stroke-width="3.2"/><path d="M6.8 12.2 L11.8 7.2" stroke="#f4e400" stroke-width="1.8"/><polygon points="12.6,6.2 15.6,3 15.6,8.4 13.8,8" fill="#0000e0"/><path d="M6 13 l1.6-0.6" stroke="#000" stroke-width="1.2"/></svg>
<div class="t" id="t27" style="left:62px;top:285px;font-size:12px;line-height:15px;color:#000;font-family:'Liberation Sans', sans-serif;font-weight:normal;letter-spacing:0.043px;">Офис продаж</div>
<div style="left:48px;top:312px;width:8px;height:1px;background:#a0a0a0;"></div>
<svg class="i" style="left:58px;top:303px;" width="16" height="16" viewBox="0 0 16 16"><rect x="0.5" y="2.5" width="12" height="12.6" fill="#fff"/><path d="M0.8 2.6v12" stroke="#808080" stroke-width="0.9"/><path d="M12.4 2.6v12.6" stroke="#000" stroke-width="1.3"/><path d="M0.8 15h12" stroke="#000" stroke-width="1.4"/><path d="M1 2.2h11.4" stroke="#000" stroke-width="3" stroke-dasharray="1 1"/><path d="M1.5 5.5h10M1.5 8.5h10M1.5 11.5h10" stroke="#b4b4b4" stroke-width="1"/><path d="M6.4 12.6 L15.2 3.8" stroke="#000" stroke-width="3.2"/><path d="M6.8 12.2 L11.8 7.2" stroke="#f4e400" stroke-width="1.8"/><polygon points="12.6,6.2 15.6,3 15.6,8.4 13.8,8" fill="#0000e0"/><path d="M6 13 l1.6-0.6" stroke="#000" stroke-width="1.2"/></svg>
<div class="t" id="t28" style="left:78px;top:304px;font-size:12px;line-height:15px;color:#000;font-family:'Liberation Sans', sans-serif;font-weight:normal;transform:scaleX(1.0233844304177937);transform-origin:0 0;">Договора</div>
<div style="left:48px;top:331px;width:8px;height:1px;background:#a0a0a0;"></div>
<svg class="i" style="left:58px;top:322px;" width="16" height="16" viewBox="0 0 16 16"><path d="M2.5 0.8h8l3 3v11.6h-11z" fill="#fff" stroke="#5a5a5a" stroke-width="0.9"/><path d="M10.5 0.8v3h3" fill="none" stroke="#8a8a8a" stroke-width="0.8"/><path d="M7.4 2.4h1.6v3h2l-2.8 2.8-2.8-2.8h2z" fill="#f8e000"/><path d="M4.4 10h7.2M4.4 12.4h7.2" stroke="#808080" stroke-width="1"/></svg>
<div class="t" id="t29" style="left:78px;top:323px;font-size:12px;line-height:15px;color:#000;font-family:'Liberation Sans', sans-serif;font-weight:normal;transform:scaleX(0.9790368271954674);transform-origin:0 0;">Счета</div>
<div style="left:48px;top:350px;width:8px;height:1px;background:#a0a0a0;"></div>
<svg class="i" style="left:58px;top:341px;" width="16" height="16" viewBox="0 0 16 16"><path d="M3.6 1.6 Q4 0.6 5.4 0.6 L14.6 0.6 Q15.8 1.2 14.8 2.6 L13.4 3 L13.4 13 L4.2 13 L3.6 12z" fill="#f4e6b8" stroke="#c8b078" stroke-width="0.7"/><path d="M0.6 13.6 Q0.4 12.2 2 12 L12.4 12 Q13.6 12.6 12.8 14.4 Q12.2 15.2 11 15.2 L2 15.2 Q0.8 15 0.6 13.6z" fill="#f0deaa" stroke="#c0a868" stroke-width="0.7"/><path d="M5.6 3.6h5.8M5.6 5.6h5.8M5.6 7.6h5.8M5.6 9.6h5.8" stroke="#8484b4" stroke-width="0.9"/></svg>
<div class="t" id="t30" style="left:78px;top:342px;font-size:12px;line-height:15px;color:#000;font-family:'Liberation Sans', sans-serif;font-weight:normal;letter-spacing:0.020px;">Продажа по накладной</div>
<div style="left:48px;top:369px;width:8px;height:1px;background:#a0a0a0;"></div>
<div style="left:44px;top:363px;width:9px;height:9px;border:1px solid #919191;background:#fff;"></div>
<div style="left:46px;top:367px;width:5px;height:1px;background:#000;"></div>
<div style="left:48px;top:365px;width:1px;height:5px;background:#000;"></div>
<svg class="i" style="left:58px;top:360px;" width="16" height="16" viewBox="0 0 16 16"><polygon points="4,4 8,4 12,8 8,12 4,12 8,8" fill="#4a7ad8"/><polygon points="5.6,4.6 7,4.6 10.4,8 7,11.4 5.6,11.4 9,8" fill="#8aaef0"/></svg>
<div class="t" id="t31" style="left:78px;top:361px;font-size:12px;line-height:15px;color:#000;font-family:'Liberation Sans', sans-serif;font-weight:normal;transform:scaleX(1.0469266358228684);transform-origin:0 0;">Функции</div>
<div style="left:48px;top:388px;width:8px;height:1px;background:#a0a0a0;"></div>
<div style="left:44px;top:382px;width:9px;height:9px;border:1px solid #919191;background:#fff;"></div>
<div style="left:46px;top:386px;width:5px;height:1px;background:#000;"></div>
<div style="left:48px;top:384px;width:1px;height:5px;background:#000;"></div>
<svg class="i" style="left:58px;top:379px;" width="16" height="16" viewBox="0 0 16 16"><rect x="2.6" y="1.6" width="12" height="14" fill="#a0a0a0" opacity="0.55"/><path d="M1.5 0.6h9.6l2.6 2.6v11.6h-12.2z" fill="#fff" stroke="#7a7a7a" stroke-width="0.8"/><path d="M11.1 0.6v2.6h2.6" fill="#e8e8e8" stroke="#9a9a9a" stroke-width="0.6"/><path d="M4 4.4h6.6M4 6.4h7.4M4 8.4h7.4M4 10.4h7.4M4 12.4h7.4" stroke="#2a6ad0" stroke-width="0.9"/></svg>
<div class="t" id="t32" style="left:78px;top:380px;font-size:12px;line-height:15px;color:#000;font-family:'Liberation Sans', sans-serif;font-weight:normal;letter-spacing:-0.014px;">Отчеты</div>
<div style="left:48px;top:407px;width:8px;height:1px;background:#a0a0a0;"></div>
<div style="left:44px;top:401px;width:9px;height:9px;border:1px solid #919191;background:#fff;"></div>
<div style="left:46px;top:405px;width:5px;height:1px;background:#000;"></div>
<div style="left:48px;top:403px;width:1px;height:5px;background:#000;"></div>
<svg class="i" style="left:58px;top:398px;" width="16" height="16" viewBox="0 0 16 16"><polygon points="4,4 8,4 12,8 8,12 4,12 8,8" fill="#4a7ad8"/><polygon points="5.6,4.6 7,4.6 10.4,8 7,11.4 5.6,11.4 9,8" fill="#8aaef0"/></svg>
<div class="t" id="t33" style="left:78px;top:399px;font-size:12px;line-height:15px;color:#000;font-family:'Liberation Sans', sans-serif;font-weight:normal;transform:scaleX(1.0384698044272513);transform-origin:0 0;">Справочники</div>
<div style="left:28px;top:420px;width:9px;height:9px;border:1px solid #919191;background:#fff;"></div>
<div style="left:30px;top:424px;width:5px;height:1px;background:#000;"></div>
<svg class="i" style="left:42px;top:417px;" width="16" height="16" viewBox="0 0 16 16"><path d="M0.8 15.4 Q0.6 10.4 5 10 L11 10 Q15.4 10.4 15.2 15.4z" fill="#aab0cc"/><path d="M1 15.6h14" stroke="#d8dcec" stroke-width="1.6"/><polygon points="6,10 8,12.6 10,10" fill="#fff"/><polygon points="7.4,11 8.6,11 9,15.6 7,15.6" fill="#e84058"/><rect x="6.8" y="7.4" width="2.4" height="3" fill="#f2c49c"/><ellipse cx="8" cy="5.4" rx="2.5" ry="3" fill="#f8d4ac"/><path d="M5 5.8 Q4.4 1.4 8 0.4 Q12 1 11 5.8 Q10.6 3.4 8.8 3 Q6 3 5 5.8z" fill="#a86c20"/></svg>
<div class="t" id="t34" style="left:62px;top:418px;font-size:12px;line-height:15px;color:#000;font-family:'Liberation Sans', sans-serif;font-weight:normal;letter-spacing:0.041px;">Администратор системы</div>
<div style="left:48px;top:445px;width:8px;height:1px;background:#a0a0a0;"></div>
<div style="left:44px;top:439px;width:9px;height:9px;border:1px solid #919191;background:#fff;"></div>
<div style="left:46px;top:443px;width:5px;height:1px;background:#000;"></div>
<div style="left:48px;top:441px;width:1px;height:5px;background:#000;"></div>
<svg class="i" style="left:58px;top:436px;" width="16" height="16" viewBox="0 0 16 16"><polygon points="4,4 8,4 12,8 8,12 4,12 8,8" fill="#4a7ad8"/><polygon points="5.6,4.6 7,4.6 10.4,8 7,11.4 5.6,11.4 9,8" fill="#8aaef0"/></svg>
<div class="t" id="t35" style="left:78px;top:437px;font-size:12px;line-height:15px;color:#000;font-family:'Liberation Sans', sans-serif;font-weight:normal;transform:scaleX(0.9633728590250329);transform-origin:0 0;">Отладка</div>
<div style="left:48px;top:464px;width:8px;height:1px;background:#a0a0a0;"></div>
<div style="left:44px;top:458px;width:9px;height:9px;border:1px solid #919191;background:#fff;"></div>
<div style="left:46px;top:462px;width:5px;height:1px;background:#000;"></div>
<div style="left:48px;top:460px;width:1px;height:5px;background:#000;"></div>
<svg class="i" style="left:58px;top:455px;" width="16" height="16" viewBox="0 0 16 16"><polygon points="4,4 8,4 12,8 8,12 4,12 8,8" fill="#4a7ad8"/><polygon points="5.6,4.6 7,4.6 10.4,8 7,11.4 5.6,11.4 9,8" fill="#8aaef0"/></svg>
<div class="t" id="t36" style="left:78px;top:456px;font-size:12px;line-height:15px;color:#000;font-family:'Liberation Sans', sans-serif;font-weight:normal;letter-spacing:0.033px;">Служебные процедуры</div>
<div style="left:48px;top:483px;width:8px;height:1px;background:#a0a0a0;"></div>
<div style="left:58px;top:483px;width:16px;height:1px;background:#808080;"></div>
<div style="left:48px;top:502px;width:8px;height:1px;background:#a0a0a0;"></div>
<div style="left:76px;top:491px;width:200px;height:19px;background:#dce6f8;border:1px dotted #000;"></div>
<svg class="i" style="left:58px;top:493px;" width="16" height="16" viewBox="0 0 16 16"><defs><linearGradient id="gtr" x1="0" y1="0" x2="1" y2="1"><stop offset="0" stop-color="#d8d8d8"/><stop offset="1" stop-color="#9c9c9c"/></linearGradient></defs><rect x="0.4" y="2" width="10.4" height="9.6" fill="url(#gtr)" stroke="#8a8a8a" stroke-width="0.7"/><path d="M11 5h2.6q2 0.6 2.2 3v3.6h-4.8z" fill="#f47a14"/><rect x="12.4" y="6" width="2.4" height="1.8" fill="#ffe8a0"/><rect x="13.4" y="9" width="2.2" height="1" fill="#2a2a2a"/><rect x="0.4" y="11.4" width="15.2" height="0.9" fill="#555"/><circle cx="3.6" cy="12.8" r="1.35" fill="#fff" stroke="#222" stroke-width="0.9"/><circle cx="13" cy="12.8" r="1.35" fill="#fff" stroke="#222" stroke-width="0.9"/></svg>
<div class="t" id="t37" style="left:78px;top:494px;font-size:12px;line-height:15px;color:#000;font-family:'Liberation Sans', sans-serif;font-weight:normal;transform:scaleX(0.9854237716306681);transform-origin:0 0;">Настройка автоотчета</div>
<div style="left:48px;top:521px;width:8px;height:1px;background:#a0a0a0;"></div>
<svg class="i" style="left:58px;top:512px;" width="16" height="16" viewBox="0 0 16 16"><rect x="1.5" y="1.5" width="14" height="14" fill="#777" opacity="0.55"/><rect x="0.5" y="0.5" width="14" height="14" fill="#fff" stroke="#0000f0" stroke-width="1"/><rect x="0" y="0" width="15" height="3.6" fill="#0000f0"/><path d="M2 1.8h11.4" stroke="#fff" stroke-width="1" stroke-dasharray="2 1"/><path d="M2.6 6.5h4M8 6.5h1.4M11 6.5h1.6M2.6 8.7h6M10.4 8.7h1M2.6 10.9h1.4M5.6 10.9h2M9.6 10.9h3M2.6 12.6h10" stroke="#707070" stroke-width="1"/></svg>
<div class="t" id="t38" style="left:78px;top:513px;font-size:12px;line-height:15px;color:#000;font-family:'Liberation Sans', sans-serif;font-weight:normal;">Журнал транзакций по пользователям</div>
<div style="left:48px;top:540px;width:8px;height:1px;background:#a0a0a0;"></div>
<svg class="i" style="left:58px;top:531px;" width="16" height="16" viewBox="0 0 16 16"><rect x="1.5" y="1.5" width="14" height="14" fill="#777" opacity="0.55"/><rect x="0.5" y="0.5" width="14" height="14" fill="#fff" stroke="#0000f0" stroke-width="1"/><rect x="0" y="0" width="15" height="3.6" fill="#0000f0"/><path d="M2 1.8h11.4" stroke="#fff" stroke-width="1" stroke-dasharray="2 1"/><path d="M2.6 6.5h4M8 6.5h1.4M11 6.5h1.6M2.6 8.7h6M10.4 8.7h1M2.6 10.9h1.4M5.6 10.9h2M9.6 10.9h3M2.6 12.6h10" stroke="#707070" stroke-width="1"/></svg>
<div class="t" id="t39" style="left:78px;top:532px;font-size:12px;line-height:15px;color:#000;font-family:'Liberation Sans', sans-serif;font-weight:normal;transform:scaleX(0.9786248350681718);transform-origin:0 0;">Все рабочие места</div>
<div style="left:48px;top:559px;width:8px;height:1px;background:#a0a0a0;"></div>
<div style="left:58px;top:559px;width:16px;height:1px;background:#808080;"></div>
<div style="left:48px;top:578px;width:8px;height:1px;background:#a0a0a0;"></div>
<svg class="i" style="left:58px;top:569px;" width="16" height="16" viewBox="0 0 16 16"><path d="M3.6 1.6 Q4 0.6 5.4 0.6 L14.6 0.6 Q15.8 1.2 14.8 2.6 L13.4 3 L13.4 13 L4.2 13 L3.6 12z" fill="#f4e6b8" stroke="#c8b078" stroke-width="0.7"/><path d="M0.6 13.6 Q0.4 12.2 2 12 L12.4 12 Q13.6 12.6 12.8 14.4 Q12.2 15.2 11 15.2 L2 15.2 Q0.8 15 0.6 13.6z" fill="#f0deaa" stroke="#c0a868" stroke-width="0.7"/><path d="M5.6 3.6h5.8M5.6 5.6h5.8M5.6 7.6h5.8M5.6 9.6h5.8" stroke="#8484b4" stroke-width="0.9"/></svg>
<div class="t" id="t40" style="left:78px;top:570px;font-size:12px;line-height:15px;color:#000;font-family:'Liberation Sans', sans-serif;font-weight:normal;">Все товарные документы</div>
<div style="left:48px;top:597px;width:8px;height:1px;background:#a0a0a0;"></div>
<svg class="i" style="left:58px;top:588px;" width="16" height="16" viewBox="0 0 16 16"><path d="M3.6 1.6 Q4 0.6 5.4 0.6 L14.6 0.6 Q15.8 1.2 14.8 2.6 L13.4 3 L13.4 13 L4.2 13 L3.6 12z" fill="#f4e6b8" stroke="#c8b078" stroke-width="0.7"/><path d="M0.6 13.6 Q0.4 12.2 2 12 L12.4 12 Q13.6 12.6 12.8 14.4 Q12.2 15.2 11 15.2 L2 15.2 Q0.8 15 0.6 13.6z" fill="#f0deaa" stroke="#c0a868" stroke-width="0.7"/><path d="M5.6 3.6h5.8M5.6 5.6h5.8M5.6 7.6h5.8M5.6 9.6h5.8" stroke="#8484b4" stroke-width="0.9"/></svg>
<div class="t" id="t41" style="left:78px;top:589px;font-size:12px;line-height:15px;color:#000;font-family:'Liberation Sans', sans-serif;font-weight:normal;transform:scaleX(0.9868882733148661);transform-origin:0 0;">Все документы</div>
<div style="left:48px;top:616px;width:8px;height:1px;background:#a0a0a0;"></div>
<div style="left:58px;top:616px;width:16px;height:1px;background:#808080;"></div>
<div style="left:48px;top:635px;width:8px;height:1px;background:#a0a0a0;"></div>
<svg class="i" style="left:58px;top:626px;" width="16" height="16" viewBox="0 0 16 16"><rect x="1.5" y="1.5" width="14" height="14" fill="#777" opacity="0.55"/><rect x="0.5" y="0.5" width="14" height="14" fill="#fff" stroke="#0000f0" stroke-width="1"/><rect x="0" y="0" width="15" height="3.6" fill="#0000f0"/><path d="M2 1.8h11.4" stroke="#fff" stroke-width="1" stroke-dasharray="2 1"/><path d="M2.6 6.5h4M8 6.5h1.4M11 6.5h1.6M2.6 8.7h6M10.4 8.7h1M2.6 10.9h1.4M5.6 10.9h2M9.6 10.9h3M2.6 12.6h10" stroke="#707070" stroke-width="1"/></svg>
<div class="t" id="t42" style="left:78px;top:627px;font-size:12px;line-height:15px;color:#000;font-family:'Liberation Sans', sans-serif;font-weight:normal;transform:scaleX(1.0370169491525423);transform-origin:0 0;">Просмотр протокола</div>
<div style="left:48px;top:654px;width:8px;height:1px;background:#a0a0a0;"></div>
<svg class="i" style="left:58px;top:645px;" width="16" height="16" viewBox="0 0 16 16"><rect x="1.5" y="1.5" width="14" height="14" fill="#777" opacity="0.55"/><rect x="0.5" y="0.5" width="14" height="14" fill="#fff" stroke="#0000f0" stroke-width="1"/><rect x="0" y="0" width="15" height="3.6" fill="#0000f0"/><path d="M2 1.8h11.4" stroke="#fff" stroke-width="1" stroke-dasharray="2 1"/><path d="M2.6 6.5h4M8 6.5h1.4M11 6.5h1.6M2.6 8.7h6M10.4 8.7h1M2.6 10.9h1.4M5.6 10.9h2M9.6 10.9h3M2.6 12.6h10" stroke="#707070" stroke-width="1"/></svg>
<div class="t" id="t43" style="left:78px;top:646px;font-size:12px;line-height:15px;color:#000;font-family:'Liberation Sans', sans-serif;font-weight:normal;">Расширенный протокол</div>
<div style="left:19px;top:673px;width:300px;height:15px;background:#f0f0f0;"></div>
<div style="left:36px;top:673px;width:300px;height:15px;background:#cdcdcd;"></div>
<svg class="i" style="left:24px;top:676px;" width="7" height="9" viewBox="0 0 7 9"><path d="M5.6 0.8 L1.4 4.5 L5.6 8.2" stroke="#404040" stroke-width="1.8" fill="none"/></svg>
</div>
<div class="clip" style="left:214px;top:76px;width:1061px;height:622px;background:#f0f0f0;box-shadow:inset 1px 1px 0 #e3e3e3,inset -1px -1px 0 #696969,inset 2px 2px 0 #fff,inset -2px -2px 0 #a0a0a0;">
<div style="left:8px;top:8px;width:1045px;height:22px;background:linear-gradient(90deg,#bfcddb,#d7e4f2);"></div>
<svg class="i" style="left:12px;top:11px;" width="16" height="16" viewBox="0 0 16 16"><path d="M0.4 4.9 Q0.7 1.8 3.7 1.6 Q6.6 1.8 7 4.9 Z" fill="#ff9d2e"/><rect x="3.2" y="0.1" width="1" height="1.6" fill="#ffb050"/><ellipse cx="3.6" cy="3.7" rx="1" ry="0.5" fill="#ffe3b8"/><circle cx="9" cy="2.9" r="1.95" fill="#1b9ab3"/><circle cx="8.5" cy="2.4" r="0.75" fill="#7fd6e4"/><g fill="none" stroke="#1a9ab5" stroke-width="2.1" stroke-linecap="round" stroke-linejoin="round"><path d="M3.7 6.6 Q4.3 8.3 6.2 8.4"/><path d="M8.1 6.4 L8.1 11.6 Q7.8 14.4 3.6 14.6"/><path d="M8.4 6.2 Q13.4 5.2 13.6 9"/><path d="M10 9.4 Q12.4 10 13 13 L14 15"/></g><path d="M7.6 6.6 L7.6 11" stroke="#6fd0e0" stroke-width="0.7" fill="none"/></svg>
<div class="t" id="t44" style="left:32px;top:12px;font-size:12px;line-height:15px;color:#000;font-family:'Liberation Sans', sans-serif;font-weight:normal;transform:scaleX(0.9870405456612352);transform-origin:0 0;">Настройка автоотчета</div>
<div style="left:1031px;top:10px;width:20px;height:18px;box-shadow:inset 1px 1px 0 #fff,inset -1px -1px 0 #696969,inset -2px -2px 0 #a0a0a0;background:#f0f0f0;"></div>
<svg class="i" style="left:1035.0px;top:14.5px;" width="10" height="9" viewBox="0 0 10 9"><path d="M1 0.3 L9 8.7 M9 0.3 L1 8.7" stroke="#000" stroke-width="2.1"/></svg>
<svg class="i" style="left:48.5px;top:40px;" width="16" height="16" viewBox="0 0 16 16"><rect x="2" y="0.6" width="1.6" height="3.4" fill="#d01818"/><polygon points="1.6,7 6.4,2 6.4,13.4 1.6,12" fill="#fafaff" stroke="#b0b0c8" stroke-width="0.5"/><polygon points="6.4,2 11,8.4 15.4,6.6 15.4,11.2 11,15 6.4,13.4" fill="#eef6fa" stroke="#b0b0c8" stroke-width="0.5"/><polygon points="1.6,7 6.4,2 11,8.4 11,15 1.6,12" fill="#fcfcff"/><polygon points="6.2,0.8 11,0.4 15.8,5.6 11.2,8.8" fill="#ffb400"/><polygon points="8.6,0.6 11,0.4 15.8,5.6 13.6,7.2" fill="#ffd23c"/><path d="M0.6 7.6 L6.2 1.2" stroke="#d89000" stroke-width="1"/><rect x="4.6" y="8.6" width="2.4" height="4.6" fill="#6060a8"/><path d="M1.6 12 L11 15 L15.4 11.2" stroke="#b8b8cc" stroke-width="0.7" fill="none"/></svg>
<div class="t" id="t45" style="left:-243.7px;width:600px;text-align:center;top:56px;font-size:12px;line-height:15px;color:#000;font-family:'Liberation Sans', sans-serif;font-weight:normal;transform:scaleX(0.9795918367346939);transform-origin:50% 0;">Подразделения</div>
<svg class="i" style="left:48.5px;top:78px;" width="16" height="16" viewBox="0 0 16 16"><path d="M10.6 10.6 L14.6 14.4" stroke="#232a72" stroke-width="3.2" stroke-linecap="butt"/><circle cx="6.4" cy="6.3" r="6" fill="#fff" stroke="#2a2f78" stroke-width="1"/><circle cx="6.6" cy="6.6" r="4.1" fill="#4f97d6"/><circle cx="5.6" cy="5.4" r="2.7" fill="#a8d0f0"/><path d="M3.2 6.2 A3 3 0 0 1 7.6 3.2" stroke="#fff" stroke-width="1" fill="none"/></svg>
<div class="t" id="t46" style="left:-243.7px;width:600px;text-align:center;top:94px;font-size:12px;line-height:15px;color:#000;font-family:'Liberation Sans', sans-serif;font-weight:normal;letter-spacing:0.015px;">Фильтр</div>
<svg class="i" style="left:48.5px;top:116px;" width="16" height="16" viewBox="0 0 16 16"><path d="M10.6 10.6 L14.6 14.4" stroke="#232a72" stroke-width="3.2" stroke-linecap="butt"/><circle cx="6.4" cy="6.3" r="6" fill="#fff" stroke="#2a2f78" stroke-width="1"/><circle cx="6.6" cy="6.6" r="4.1" fill="#4f97d6"/><circle cx="5.6" cy="5.4" r="2.7" fill="#a8d0f0"/><path d="M3.2 6.2 A3 3 0 0 1 7.6 3.2" stroke="#fff" stroke-width="1" fill="none"/><path d="M8.6 0.6 L14.8 6.4 M14.8 0.6 L8.6 6.4" stroke="#e8142c" stroke-width="2"/></svg>
<div class="t" id="t47" style="left:-243.7px;width:600px;text-align:center;top:132px;font-size:12px;line-height:15px;color:#000;font-family:'Liberation Sans', sans-serif;font-weight:normal;transform:scaleX(0.97514033680834);transform-origin:50% 0;">Снять фильтр</div>
<div style="left:12px;top:151px;width:89px;height:1px;background:#a0a0a0;"></div>
<div style="left:12px;top:152px;width:89px;height:1px;background:#fff;"></div>
<svg class="i" style="left:50px;top:159px;" width="16" height="16" viewBox="0 0 16 16"><text x="0" y="7.2" font-family="Liberation Serif, serif" font-weight="bold" font-size="9.5" fill="#00008b">A</text><text x="0" y="15.6" font-family="Liberation Serif, serif" font-weight="bold" font-size="9.5" fill="#8b0000">Я</text><path d="M11.5 0.5v12" stroke="#000" stroke-width="1.1"/><polygon points="8.8,10.4 14.2,10.4 11.5,15.6" fill="#000"/></svg>
<div class="t" id="t48" style="left:-244px;width:600px;text-align:center;top:176px;font-size:12px;line-height:15px;color:#000;font-family:'Liberation Sans', sans-serif;font-weight:normal;letter-spacing:-0.006px;">Сортировка</div>
<div style="left:105px;top:31px;width:949px;height:600px;background:#fff;box-shadow:inset 1px 1px 0 #a0a0a0,inset -1px -1px 0 #fff,inset 2px 2px 0 #696969,inset -2px -2px 0 #e3e3e3;"></div>
<div style="left:107px;top:33px;width:946px;height:38px;background:#b4b4c8;box-shadow:inset 0 1px 0 #cdcddc;"></div>
<div style="left:126px;top:33px;width:1px;height:38px;background:#74748a;"></div>
<div style="left:127px;top:33px;width:1px;height:38px;background:#d0d0e0;"></div>
<div style="left:182px;top:33px;width:1px;height:38px;background:#74748a;"></div>
<div style="left:183px;top:33px;width:1px;height:38px;background:#d0d0e0;"></div>
<div style="left:382px;top:33px;width:1px;height:38px;background:#74748a;"></div>
<div style="left:383px;top:33px;width:1px;height:38px;background:#d0d0e0;"></div>
<div class="t" id="t49" style="left:114px;top:45px;font-size:11px;line-height:14px;color:#56526a;font-family:'Liberation Sans', sans-serif;font-weight:bold;">*</div>
<div class="t" id="t50" style="left:134.5px;top:44px;font-size:11px;line-height:14px;color:#56526a;font-family:'Liberation Sans', sans-serif;font-weight:bold;transform:scaleX(1.0354391371340523);transform-origin:0 0;">Код</div>
<div class="t" id="t51" style="left:190px;top:44px;font-size:11px;line-height:14px;color:#56526a;font-family:'Liberation Sans', sans-serif;font-weight:bold;transform:scaleX(1.0120183079875977);transform-origin:0 0;">E-mail отправителя</div>
<div style="left:107px;top:71px;width:946px;height:1px;border-top:1px dotted #000;"></div>
<div style="left:107px;top:86px;width:946px;height:1px;border-top:1px dotted #000;"></div>
<div style="left:127px;top:72px;width:55px;height:14px;background:#b9c9dc;"></div>
<div class="t" id="t52" style="left:114.39999999999998px;top:73px;font-size:10px;line-height:12px;color:#000;font-family:'Liberation Sans', sans-serif;font-weight:normal;">*</div>
<div class="t" id="t53" style="left:139.5px;top:72px;font-size:12px;line-height:15px;color:#000;font-family:'Liberation Sans', sans-serif;font-weight:normal;transform:scaleX(0.8533333333333334);transform-origin:0 0;">21-3-1</div>
</div>
<div class="clip" style="left:324px;top:209px;width:618px;height:200px;background:#f0f0f0;box-shadow:inset 1px 1px 0 #e3e3e3,inset -1px -1px 0 #696969,inset 2px 2px 0 #fff,inset -2px -2px 0 #a0a0a0;">
<div style="left:8px;top:8px;width:602px;height:22px;background:linear-gradient(90deg,#bfcddb,#d7e4f2);"></div>
<svg class="i" style="left:12px;top:11px;" width="16" height="16" viewBox="0 0 16 16"><path d="M0.4 4.9 Q0.7 1.8 3.7 1.6 Q6.6 1.8 7 4.9 Z" fill="#ff9d2e"/><rect x="3.2" y="0.1" width="1" height="1.6" fill="#ffb050"/><ellipse cx="3.6" cy="3.7" rx="1" ry="0.5" fill="#ffe3b8"/><circle cx="9" cy="2.9" r="1.95" fill="#1b9ab3"/><circle cx="8.5" cy="2.4" r="0.75" fill="#7fd6e4"/><g fill="none" stroke="#1a9ab5" stroke-width="2.1" stroke-linecap="round" stroke-linejoin="round"><path d="M3.7 6.6 Q4.3 8.3 6.2 8.4"/><path d="M8.1 6.4 L8.1 11.6 Q7.8 14.4 3.6 14.6"/><path d="M8.4 6.2 Q13.4 5.2 13.6 9"/><path d="M10 9.4 Q12.4 10 13 13 L14 15"/></g><path d="M7.6 6.6 L7.6 11" stroke="#6fd0e0" stroke-width="0.7" fill="none"/></svg>
<div class="t" id="t54" style="left:32px;top:12px;font-size:12px;line-height:15px;color:#000;font-family:'Liberation Sans', sans-serif;font-weight:normal;transform:scaleX(0.9870405456612352);transform-origin:0 0;">Настройка автоотчета</div>
<div style="left:588px;top:10px;width:20px;height:18px;box-shadow:inset 1px 1px 0 #fff,inset -1px -1px 0 #696969,inset -2px -2px 0 #a0a0a0;background:#f0f0f0;"></div>
<svg class="i" style="left:592.0px;top:14.5px;" width="10" height="9" viewBox="0 0 10 9"><path d="M1 0.3 L9 8.7 M9 0.3 L1 8.7" stroke="#000" stroke-width="2.1"/></svg>
<div style="left:7px;top:30px;width:603px;height:200px;background:#becbf7;box-shadow:inset 1px 1px 0 #a0a0a0,inset -1px -1px 0 #fff,inset 2px 2px 0 #696969,inset -2px -2px 0 #e3e3e3;"></div>
<div style="left:375px;top:45px;width:228px;height:24px;background:#e6e6f5;"></div>
<div class="t" id="t55" style="left:15px;top:48px;font-size:13.33px;line-height:17px;color:#000;font-family:'Liberation Sans', sans-serif;font-weight:normal;">Код</div>
</div>
<div class="clip" style="left:210px;top:263px;width:1065px;height:435px;background:#f0f0f0;box-shadow:inset 1px 1px 0 #e3e3e3,inset -1px -1px 0 #696969,inset 2px 2px 0 #fff,inset -2px -2px 0 #a0a0a0;">
<div style="left:8px;top:8px;width:1049px;height:22px;background:linear-gradient(90deg,#bfcddb,#d7e4f2);"></div>
<svg class="i" style="left:12px;top:11px;" width="16" height="16" viewBox="0 0 16 16"><path d="M0.4 4.9 Q0.7 1.8 3.7 1.6 Q6.6 1.8 7 4.9 Z" fill="#ff9d2e"/><rect x="3.2" y="0.1" width="1" height="1.6" fill="#ffb050"/><ellipse cx="3.6" cy="3.7" rx="1" ry="0.5" fill="#ffe3b8"/><circle cx="9" cy="2.9" r="1.95" fill="#1b9ab3"/><circle cx="8.5" cy="2.4" r="0.75" fill="#7fd6e4"/><g fill="none" stroke="#1a9ab5" stroke-width="2.1" stroke-linecap="round" stroke-linejoin="round"><path d="M3.7 6.6 Q4.3 8.3 6.2 8.4"/><path d="M8.1 6.4 L8.1 11.6 Q7.8 14.4 3.6 14.6"/><path d="M8.4 6.2 Q13.4 5.2 13.6 9"/><path d="M10 9.4 Q12.4 10 13 13 L14 15"/></g><path d="M7.6 6.6 L7.6 11" stroke="#6fd0e0" stroke-width="0.7" fill="none"/></svg>
<div class="t" id="t56" style="left:32px;top:12px;font-size:12px;line-height:15px;color:#000;font-family:'Liberation Sans', sans-serif;font-weight:normal;letter-spacing:-0.053px;">Строки настройки автоотчета</div>
<div style="left:1035px;top:10px;width:20px;height:18px;box-shadow:inset 1px 1px 0 #fff,inset -1px -1px 0 #696969,inset -2px -2px 0 #a0a0a0;background:#f0f0f0;"></div>
<svg class="i" style="left:1039.0px;top:14.5px;" width="10" height="9" viewBox="0 0 10 9"><path d="M1 0.3 L9 8.7 M9 0.3 L1 8.7" stroke="#000" stroke-width="2.1"/></svg>
<div style="left:7px;top:31px;width:1051px;height:302px;background:#fff;box-shadow:inset 1px 1px 0 #a0a0a0,inset -1px -1px 0 #fff,inset 2px 2px 0 #696969,inset -2px -2px 0 #e3e3e3;"></div>
<div style="left:9px;top:33px;width:1047px;height:38px;background:#d0d0e8;box-shadow:inset 0 1px 0 #e2e2f2;"></div>
<div style="left:153px;top:33px;width:1px;height:38px;background:#84849a;"></div>
<div style="left:154px;top:33px;width:1px;height:38px;background:#e6e6f6;"></div>
<div class="t" id="t57" style="left:16.30000000000001px;top:44px;font-size:11px;line-height:14px;color:#5e5a72;font-family:'Liberation Sans', sans-serif;font-weight:bold;letter-spacing:0.059px;">Получатели Emai</div>
<div class="t" id="t58" style="left:161.3px;top:44px;font-size:11px;line-height:14px;color:#5e5a72;font-family:'Liberation Sans', sans-serif;font-weight:bold;transform:scaleX(1.0392794730474526);transform-origin:0 0;">Получатели Telegram</div>
<div style="left:9px;top:71px;width:1047px;height:1px;border-top:1px dotted #000;"></div>
<div style="left:9px;top:86px;width:1047px;height:1px;border-top:1px dotted #000;"></div>
<div style="left:9px;top:72px;width:144px;height:14px;background:#b9c9dc;"></div>
<div class="t" id="t59" style="left:13.699999999999989px;top:71px;font-size:12px;line-height:15px;color:#000;font-family:'Liberation Sans', sans-serif;font-weight:normal;transform:scaleX(0.8811366976972071);transform-origin:0 0;">tveritinovsa@gmail.com</div>
<div class="t" id="t60" style="left:158.8px;top:71px;font-size:12px;line-height:15px;color:#000;font-family:'Liberation Sans', sans-serif;font-weight:normal;transform:scaleX(0.8392350721998179);transform-origin:0 0;">telegram_1939013310</div>
<div style="left:7px;top:333px;width:1051px;height:52px;background:#e6e6e6;box-shadow:inset 1px 1px 0 #a0a0a0,inset -1px -1px 0 #fff,inset 2px 2px 0 #696969,inset -2px -2px 0 #e3e3e3;"></div>
<div class="t" id="t61" style="left:30px;top:340px;font-size:13.5px;line-height:17px;color:#000;font-family:'Liberation Mono', monospace;font-weight:bold;transform:scaleX(1.235);transform-origin:0 0;">Всего строк</div>
<div style="left:19px;top:357.6px;width:123px;height:1.4px;background:#000;"></div>
<div class="t" id="t62" style="left:-460px;width:600px;text-align:right;top:360px;font-size:14px;line-height:18px;color:#000;font-family:'Liberation Mono', monospace;font-weight:bold;transform:scaleX(1.2);transform-origin:100% 0;">1</div>
<svg class="i" style="left:46px;top:391px;" width="16" height="16" viewBox="0 0 16 16"><polygon points="0,8 8,0 8,4 16,4 16,12 8,12 8,16" fill="#2388bd"/></svg>
<div class="t" id="t63" style="left:-246px;width:600px;text-align:center;top:408px;font-size:12px;line-height:15px;color:#000;font-family:'Liberation Sans', sans-serif;font-weight:normal;transform:scaleX(0.9828259881871876);transform-origin:50% 0;">Назад</div>
<div style="left:100px;top:389px;width:1px;height:34px;background:#a0a0a0;"></div>
<div style="left:101px;top:389px;width:1px;height:34px;background:#fff;"></div>
<svg class="i" style="left:140px;top:391px;" width="16" height="16" viewBox="0 0 16 16"><defs><linearGradient id="gpl" x1="0" y1="0" x2="1" y2="1"><stop offset="0" stop-color="#5ee850"/><stop offset="0.5" stop-color="#22d808"/><stop offset="1" stop-color="#0a9a00"/></linearGradient></defs><path d="M6 1h4v5h5v4h-5v5h-4v-5h-5v-4h5z" fill="url(#gpl)"/></svg>
<div class="t" id="t64" style="left:-152px;width:600px;text-align:center;top:408px;font-size:12px;line-height:15px;color:#000;font-family:'Liberation Sans', sans-serif;font-weight:normal;letter-spacing:-0.031px;">Добавить</div>
<svg class="i" style="left:228px;top:391px;" width="16" height="16" viewBox="0 0 16 16"><polygon points="1.3,14.7 1.3,11.9 11.7,1.7 13.4,1.3 15.1,3 15.1,4.3 4.3,14.7" fill="#f6dc4a" stroke="#d6923a" stroke-width="0.9" stroke-linejoin="round"/><polygon points="10.4,3 11.7,1.7 13.4,1.3 15.1,3 15.1,4.3 13.6,5.8" fill="#fbe6d4" stroke="#d6923a" stroke-width="0.8"/><polygon points="1.3,14.7 1.3,11.9 4.3,14.7" fill="#f6cca4" stroke="#b8741c" stroke-width="0.7"/><polygon points="1.3,14.7 1.3,13.3 2.8,14.7" fill="#4a3008"/><path d="M4.2 11.8 L11.6 4.6" stroke="#fff9b8" stroke-width="1.1"/></svg>
<div class="t" id="t65" style="left:-64px;width:600px;text-align:center;top:408px;font-size:12px;line-height:15px;color:#000;font-family:'Liberation Sans', sans-serif;font-weight:normal;letter-spacing:0.045px;">Изменить</div>
<svg class="i" style="left:316px;top:391px;" width="16" height="16" viewBox="0 0 16 16"><defs><linearGradient id="gmi" x1="0" y1="0" x2="0" y2="1"><stop offset="0" stop-color="#e6485c"/><stop offset="0.45" stop-color="#d81030"/><stop offset="1" stop-color="#a00008"/></linearGradient></defs><rect x="1" y="5" width="14" height="6" rx="0.6" fill="url(#gmi)"/></svg>
<div class="t" id="t66" style="left:24px;width:600px;text-align:center;top:408px;font-size:12px;line-height:15px;color:#000;font-family:'Liberation Sans', sans-serif;font-weight:normal;transform:scaleX(0.9688373678827139);transform-origin:50% 0;">Удалить</div>
<div style="left:370px;top:389px;width:1px;height:34px;background:#a0a0a0;"></div>
<div style="left:371px;top:389px;width:1px;height:34px;background:#fff;"></div>
<svg class="i" style="left:409px;top:391px;" width="16" height="16" viewBox="0 0 16 16"><path d="M8 0 Q9.4 0.4 9.5 2.6 L9.5 6 L16 10 L16 12 L9.5 10.2 L9.2 13 L11.4 14.4 L11.4 15.8 L8 15 L4.6 15.8 L4.6 14.4 L6.8 13 L6.5 10.2 L0 12 L0 10 L6.5 6 L6.5 2.6 Q6.6 0.4 8 0z" fill="#0c0c84"/></svg>
<div class="t" id="t67" style="left:117px;width:600px;text-align:center;top:408px;font-size:12px;line-height:15px;color:#000;font-family:'Liberation Sans', sans-serif;font-weight:normal;transform:scaleX(1.0228054826480022);transform-origin:50% 0;">Проводки</div>
<svg class="i" style="left:497px;top:391px;" width="16" height="16" viewBox="0 0 16 16"><defs><radialGradient id="gap" cx="0.4" cy="0.4" r="0.7"><stop offset="0" stop-color="#ffffa0"/><stop offset="0.7" stop-color="#f0f020"/><stop offset="1" stop-color="#c8c800"/></radialGradient></defs><path d="M8 4.4 Q4.6 2.6 2.6 5 Q0.6 8 2.6 12 Q4.4 15.4 6.4 15.2 Q8 14.6 9.6 15.2 Q11.8 15.4 13.4 12 Q15.2 8 13.4 5 Q11.4 2.6 8 4.4z" fill="url(#gap)" stroke="#5a5a10" stroke-width="0.9"/><path d="M8 4.6 Q8 2.4 9.2 1" stroke="#3a2a08" stroke-width="1" fill="none"/><path d="M9 2.6 Q10.6 0.2 13 1.2 Q11.6 3.6 9 2.6z" fill="#18a018"/></svg>
<div class="t" id="t68" style="left:205px;width:600px;text-align:center;top:408px;font-size:12px;line-height:15px;color:#000;font-family:'Liberation Sans', sans-serif;font-weight:normal;transform:scaleX(1.0121745938539832);transform-origin:50% 0;">Карточка ТМЦ</div>
</div>
<div class="clip" style="left:404px;top:256px;width:853px;height:363px;background:#f0f0f0;box-shadow:inset 1px 1px 0 #e3e3e3,inset -1px -1px 0 #696969,inset 2px 2px 0 #fff,inset -2px -2px 0 #a0a0a0;">
<div style="left:8px;top:8px;width:837px;height:22px;background:linear-gradient(90deg,#99b4d1,#b9d1ea);"></div>
<svg class="i" style="left:12px;top:11px;" width="16" height="16" viewBox="0 0 16 16"><path d="M0.4 4.9 Q0.7 1.8 3.7 1.6 Q6.6 1.8 7 4.9 Z" fill="#ff9d2e"/><rect x="3.2" y="0.1" width="1" height="1.6" fill="#ffb050"/><ellipse cx="3.6" cy="3.7" rx="1" ry="0.5" fill="#ffe3b8"/><circle cx="9" cy="2.9" r="1.95" fill="#1b9ab3"/><circle cx="8.5" cy="2.4" r="0.75" fill="#7fd6e4"/><g fill="none" stroke="#1a9ab5" stroke-width="2.1" stroke-linecap="round" stroke-linejoin="round"><path d="M3.7 6.6 Q4.3 8.3 6.2 8.4"/><path d="M8.1 6.4 L8.1 11.6 Q7.8 14.4 3.6 14.6"/><path d="M8.4 6.2 Q13.4 5.2 13.6 9"/><path d="M10 9.4 Q12.4 10 13 13 L14 15"/></g><path d="M7.6 6.6 L7.6 11" stroke="#6fd0e0" stroke-width="0.7" fill="none"/></svg>
<div class="t" id="t69" style="left:32px;top:12px;font-size:12px;line-height:15px;color:#000;font-family:'Liberation Sans', sans-serif;font-weight:normal;letter-spacing:-0.062px;">Строка настройки автоотчета</div>
<div style="left:823px;top:10px;width:20px;height:18px;box-shadow:inset 1px 1px 0 #fff,inset -1px -1px 0 #696969,inset -2px -2px 0 #a0a0a0;background:#f0f0f0;"></div>
<svg class="i" style="left:827.0px;top:14.5px;" width="10" height="9" viewBox="0 0 10 9"><path d="M1 0.3 L9 8.7 M9 0.3 L1 8.7" stroke="#000" stroke-width="2.1"/></svg>
<div style="left:7px;top:31px;width:838px;height:281px;background:#becbf7;box-shadow:inset 1px 1px 0 #a0a0a0,inset 2px 2px 0 #696969,inset -1px -1px 0 #fff;"></div>
<div style="left:364px;top:45px;width:474px;height:24px;background:#e6e6f5;"></div>
<div class="t" id="t70" style="left:15px;top:49px;font-size:13.33px;line-height:17px;color:#000;font-family:'Liberation Sans', sans-serif;font-weight:normal;transform:scaleX(0.9497326203208556);transform-origin:0 0;">Период</div>
<div class="t" id="t71" style="left:367px;top:49px;font-size:13.33px;line-height:17px;color:#505050;font-family:'Liberation Sans', sans-serif;font-weight:normal;width:484.04605263157896px;overflow:hidden;transform:scaleX(0.9668501529051987);transform-origin:0 0;">Сегодня</div>
<div style="left:364px;top:74px;width:474px;height:24px;background:#e6e6f5;"></div>
<div class="t" id="t72" style="left:15px;top:78px;font-size:13.33px;line-height:17px;color:#000;font-family:'Liberation Sans', sans-serif;font-weight:normal;transform:scaleX(0.9776311448366874);transform-origin:0 0;">Формат</div>
<div class="t" id="t73" style="left:367px;top:78px;font-size:13.33px;line-height:17px;color:#505050;font-family:'Liberation Sans', sans-serif;font-weight:normal;width:486.2470794392523px;overflow:hidden;transform:scaleX(0.9624736472241744);transform-origin:0 0;">.pdf</div>
<div style="left:364px;top:103px;width:474px;height:24px;background:#e6e6f5;"></div>
<div class="t" id="t74" style="left:15px;top:107px;font-size:13.33px;line-height:17px;color:#000;font-family:'Liberation Sans', sans-serif;font-weight:normal;transform:scaleX(0.9342465753424656);transform-origin:0 0;">Отчет</div>
<div class="t" id="t75" style="left:367px;top:107px;font-size:13.33px;line-height:17px;color:#505050;font-family:'Liberation Sans', sans-serif;font-weight:normal;width:481.57222762645915px;overflow:hidden;transform:scaleX(0.9718168389955687);transform-origin:0 0;">Выручка</div>
<div style="left:364px;top:132px;width:474px;height:24px;background:#e6e6f5;"></div>
<div class="t" id="t76" style="left:15px;top:136px;font-size:13.33px;line-height:17px;color:#000;font-family:'Liberation Sans', sans-serif;font-weight:normal;transform:scaleX(0.9605726007070223);transform-origin:0 0;">Путь к файлам конфигурации отчётов для пользователя \</div>
<div class="t" id="t77" style="left:367px;top:136px;font-size:13.33px;line-height:17px;color:#505050;font-family:'Liberation Sans', sans-serif;font-weight:normal;width:484.5932427862939px;overflow:hidden;transform:scaleX(0.9657584107221826);transform-origin:0 0;">C:\Users\Slava\AppData\Roaming\Jupiter\HOME\forms\12124190[58720261]\</div>
<div style="left:364px;top:161px;width:474px;height:24px;background:#e6e6f5;"></div>
<div class="t" id="t78" style="left:15px;top:165px;font-size:13.33px;line-height:17px;color:#000;font-family:'Liberation Sans', sans-serif;font-weight:normal;transform:scaleX(0.9478095238095238);transform-origin:0 0;">Настройка</div>
<div class="t" id="t79" style="left:367px;top:165px;font-size:13.33px;line-height:17px;color:#505050;font-family:'Liberation Sans', sans-serif;font-weight:normal;width:487.60204844497605px;overflow:hidden;transform:scaleX(0.9597990851197418);transform-origin:0 0;">C:\Users\Slava\AppData\Roaming\Jupiter\HOME\forms\12124190[58720261]\ВЫРУЧКА</div>
<div style="left:364px;top:190px;width:474px;height:24px;background:#e6e6f5;"></div>
<div class="t" id="t80" style="left:15px;top:194px;font-size:13.33px;line-height:17px;color:#000;font-family:'Liberation Sans', sans-serif;font-weight:normal;transform:scaleX(0.9783824640967499);transform-origin:0 0;">Получатели Email (через ,)</div>
<div class="t" id="t81" style="left:367px;top:194px;font-size:13.33px;line-height:17px;color:#505050;font-family:'Liberation Sans', sans-serif;font-weight:normal;width:486.8020374449339px;overflow:hidden;transform:scaleX(0.9613764199845595);transform-origin:0 0;">tveritinovsa@gmail.com</div>
<div style="left:364px;top:219px;width:474px;height:24px;background:#e6e6f5;"></div>
<div class="t" id="t82" style="left:15px;top:223px;font-size:13.33px;line-height:17px;color:#000;font-family:'Liberation Sans', sans-serif;font-weight:normal;transform:scaleX(0.9707835103269504);transform-origin:0 0;">Получатели Telegram (через ,)</div>
<div class="t" id="t83" style="left:367px;top:223px;font-size:13.33px;line-height:17px;color:#505050;font-family:'Liberation Sans', sans-serif;font-weight:normal;width:489.94345965770174px;overflow:hidden;transform:scaleX(0.9552122612820825);transform-origin:0 0;">telegram_1939013310,telegram_261986696,telegram_42981813</div>
<div style="left:364px;top:248px;width:474px;height:24px;background:#e6e6f5;"></div>
<div class="t" id="t84" style="left:15px;top:252px;font-size:13.33px;line-height:17px;color:#000;font-family:'Liberation Sans', sans-serif;font-weight:normal;transform:scaleX(0.9830446672743848);transform-origin:0 0;">Тема письма\Подпись в Telegram</div>
<div class="t" id="t85" style="left:367px;top:252px;font-size:13.33px;line-height:17px;color:#505050;font-family:'Liberation Sans', sans-serif;font-weight:normal;width:479.66867469879514px;overflow:hidden;transform:scaleX(0.9756734693877551);transform-origin:0 0;">Выручка по видам оплат</div>
<div style="left:364px;top:277px;width:474px;height:24px;background:#e6e6f5;"></div>
<div class="t" id="t86" style="left:15px;top:281px;font-size:13.33px;line-height:17px;color:#000;font-family:'Liberation Sans', sans-serif;font-weight:normal;transform:scaleX(0.9552949934859483);transform-origin:0 0;">Комментарий</div>
<div style="left:10px;top:315px;width:63px;height:38px;box-shadow:inset 1px 1px 0 #fff,inset -1px -1px 0 #808080;"></div>
<div style="left:12px;top:317px;width:59.5px;height:34px;border:1px dotted #000;"></div>
<svg class="i" style="left:33.5px;top:319px;" width="16" height="16" viewBox="0 0 16 16"><defs><linearGradient id="gck" x1="0" y1="0" x2="0.3" y2="1"><stop offset="0" stop-color="#b4dcf0"/><stop offset="0.5" stop-color="#5aa8d8"/><stop offset="1" stop-color="#2f86c4"/></linearGradient></defs><path d="M0.6 6.4 Q1.4 4.6 3 4.8 L6 8.4 L12.2 1.2 Q13.8 1.6 14.4 3.6 L14.4 6 L6 15 L0.6 8.8z" fill="url(#gck)" stroke="#2a7ab8" stroke-width="0.8" stroke-linejoin="round"/><path d="M1.6 6.6 L6 11.2 L13.6 3.4" stroke="#c8e8f6" stroke-width="1.1" fill="none" opacity="0.7"/></svg>
<div class="t" id="t87" style="left:14px;top:336px;font-size:12px;line-height:15px;color:#000;font-family:'Liberation Sans', sans-serif;font-weight:normal;transform:scaleX(0.9638866396761133);transform-origin:0 0;">Утвердить</div>
<svg class="i" style="left:98px;top:321px;" width="12" height="12" viewBox="0 0 12 12"><path d="M2.4 2.4 L9.6 9.6 M9.6 2.4 L2.4 9.6" stroke="#e4646c" stroke-width="3.6" stroke-linecap="round"/><path d="M2.6 2.6 L9.4 9.4 M9.4 2.6 L2.6 9.4" stroke="#f09898" stroke-width="1.5" stroke-linecap="round"/></svg>
<div class="t" id="t88" style="left:77.60000000000002px;top:336px;font-size:12px;line-height:15px;color:#000;font-family:'Liberation Sans', sans-serif;font-weight:normal;letter-spacing:-0.068px;">Отменить</div>
</div>
<div style="left:388px;top:473px;width:802px;height:32px;border:2px solid #ec1b24;"></div>
<div style="left:8px;top:702px;width:949px;height:17px;box-shadow:inset 1px 1px 0 #a0a0a0,inset -1px -1px 0 #fff;"></div>
<div style="left:959px;top:702px;width:118px;height:17px;box-shadow:inset 1px 1px 0 #a0a0a0,inset -1px -1px 0 #fff;"></div>
<div style="left:1079px;top:702px;width:76px;height:17px;box-shadow:inset 1px 1px 0 #a0a0a0,inset -1px -1px 0 #fff;"></div>
<div style="left:1157px;top:702px;width:30px;height:17px;box-shadow:inset 1px 1px 0 #a0a0a0,inset -1px -1px 0 #fff;"></div>
<div style="left:1189px;top:702px;width:33px;height:17px;box-shadow:inset 1px 1px 0 #a0a0a0,inset -1px -1px 0 #fff;"></div>
<div style="left:1224px;top:702px;width:33px;height:17px;box-shadow:inset 1px 1px 0 #a0a0a0,inset -1px -1px 0 #fff;"></div>
<div class="t" id="t89" style="left:22px;top:704px;font-size:12px;line-height:15px;color:#000;font-family:'Liberation Sans', sans-serif;font-weight:normal;transform:scaleX(0.8970032272936838);transform-origin:0 0;">Система JUPITER</div>
<div class="t" id="t90" style="left:122px;top:704px;font-size:12px;line-height:15px;color:#000;font-family:'Liberation Sans', sans-serif;font-weight:normal;transform:scaleX(1.0435333227798005);transform-origin:0 0;">www.jupiter-soft.ru</div>
<div class="t" id="t91" style="left:234px;top:704px;font-size:12px;line-height:15px;color:#000;font-family:'Liberation Sans', sans-serif;font-weight:normal;transform:scaleX(0.9264541570818271);transform-origin:0 0;">+7(495) 223 1996</div>
<div class="t" id="t92" style="left:962px;top:704px;font-size:11.3px;line-height:14px;color:#000;font-family:'Liberation Sans', sans-serif;font-weight:normal;transform:scaleX(0.9157757496740547);transform-origin:0 0;">JUPDELIVERY016</div>
<div class="t" id="t93" style="left:1082px;top:704px;font-size:11.6px;line-height:14px;color:#000;font-family:'Liberation Sans', sans-serif;font-weight:normal;transform:scaleX(0.9857855954361777);transform-origin:0 0;">ORA curs.16</div>
<svg class="i" style="left:1264px;top:706px;" width="13" height="13" viewBox="0 0 13 13"><path d="M1 12.5 L12.5 1 M5 12.5 L12.5 5 M9 12.5 L12.5 9" stroke="#9c9c9c" stroke-width="1.7"/></svg>
</body></html>
